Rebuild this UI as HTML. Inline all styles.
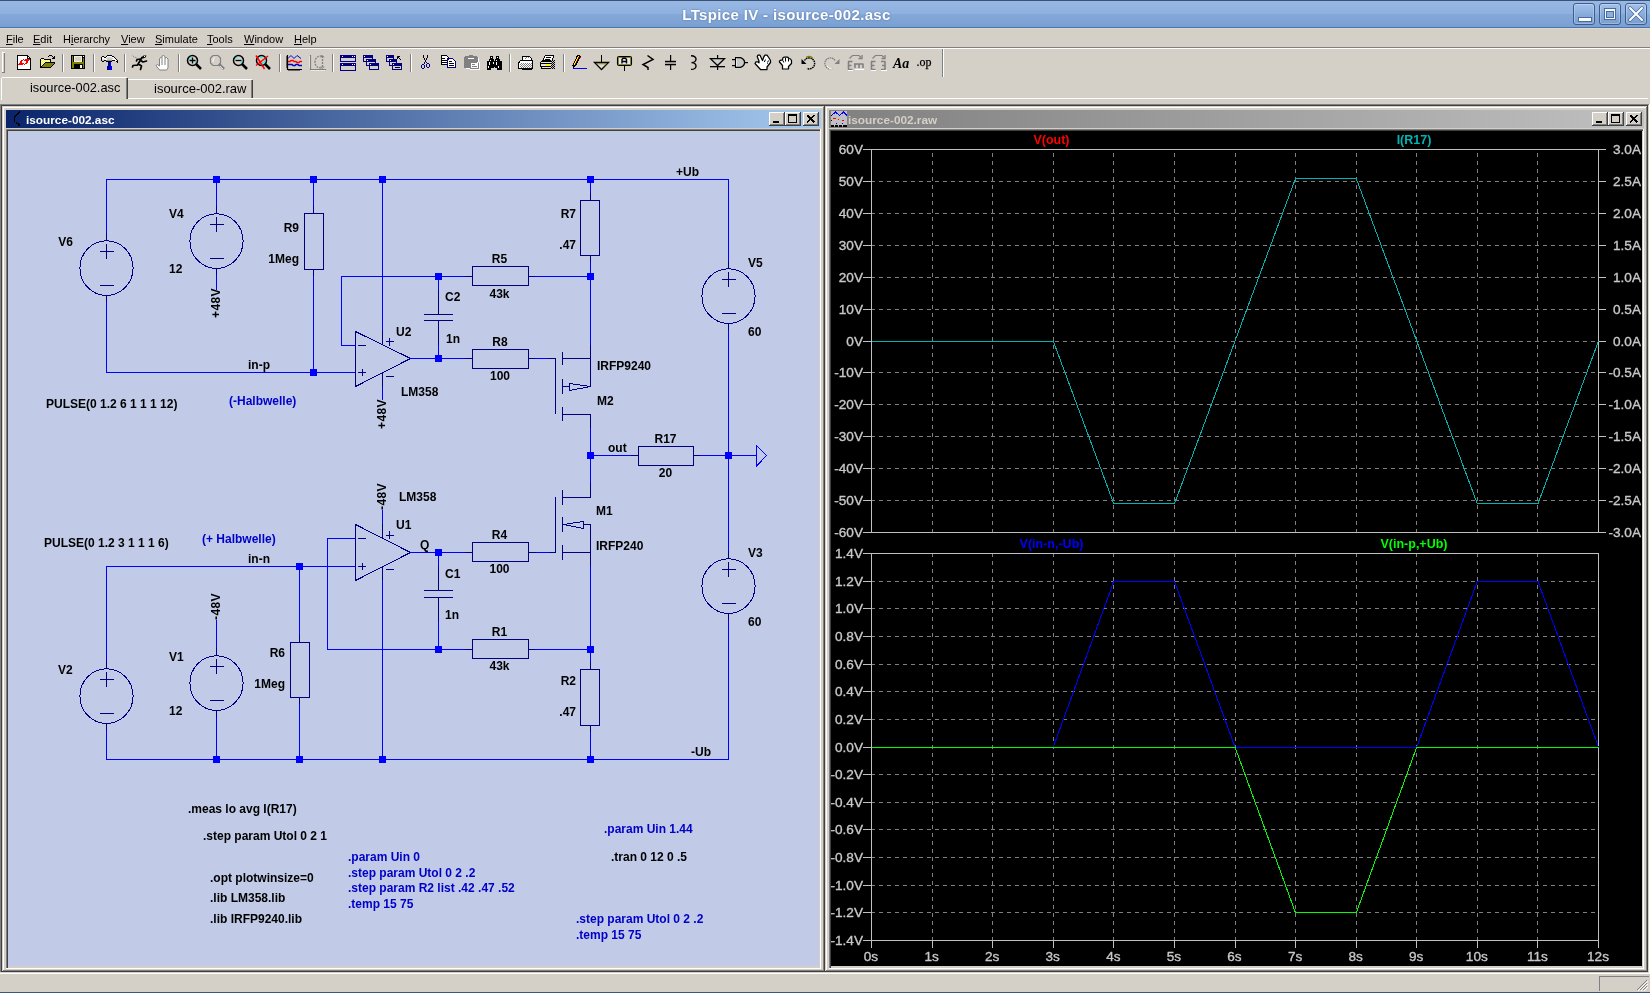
<!DOCTYPE html><html><head><meta charset="utf-8"><style>html,body{margin:0;padding:0;}body{width:1650px;height:993px;overflow:hidden;position:relative;background:#d4d0c8;font-family:"Liberation Sans",sans-serif;} svg,div{will-change:transform;}</style></head><body>
<div style="position:absolute;left:0;top:0;width:1650px;height:28px;background:linear-gradient(#9fc0ea 0px,#9fc0ea 1px,#98b8e3 1px,#8fb1df 14px,#84a8d8 14px,#7aa0d2 27px,#4a74ad 27px,#4a74ad 28px);"></div>
<div style="position:absolute;left:0;top:0;width:1650px;height:1px;background:#3c5278"></div>
<div style="position:absolute;left:0;top:28px;width:1650px;height:1px;background:#ddd9d0"></div>
<div style="position:absolute;left:0;top:6px;width:1573px;text-align:center;font:bold 15px 'Liberation Sans', sans-serif;color:#fff;text-shadow:0 0 2px #4a6a98;white-space:nowrap;letter-spacing:0.35px">LTspice IV - isource-002.asc</div>
<div style="position:absolute;left:1573px;top:3px;width:20px;height:20px;border:1px solid #3f5c8c;border-radius:3px;background:linear-gradient(#a4c2ea,#85aadb 55%,#7aa0d2);box-shadow:inset 0 0 0 1px rgba(255,255,255,0.25)"></div>
<div style="position:absolute;left:1599px;top:3px;width:20px;height:20px;border:1px solid #3f5c8c;border-radius:3px;background:linear-gradient(#a4c2ea,#85aadb 55%,#7aa0d2);box-shadow:inset 0 0 0 1px rgba(255,255,255,0.25)"></div>
<div style="position:absolute;left:1625px;top:3px;width:20px;height:20px;border:1px solid #3f5c8c;border-radius:3px;background:linear-gradient(#a4c2ea,#85aadb 55%,#7aa0d2);box-shadow:inset 0 0 0 1px rgba(255,255,255,0.25)"></div>
<div style="position:absolute;left:1578px;top:17px;width:12px;height:3px;background:#fff;border:1px solid #4a6a9c"></div>
<div style="position:absolute;left:1604px;top:8px;width:12px;height:12px;background:#4a6a9c"></div>
<div style="position:absolute;left:1605px;top:9px;width:10px;height:10px;background:#f4f8ff"></div>
<div style="position:absolute;left:1606px;top:11px;width:8px;height:7px;background:#4a6a9c"></div>
<div style="position:absolute;left:1607px;top:12px;width:6px;height:5px;background:#8cafdd"></div>
<svg style="position:absolute;left:1625px;top:3px" width="22" height="22"><path d="M5 5 L17 17 M17 5 L5 17" stroke="#4a6a9c" stroke-width="3.5" stroke-linecap="round"/><path d="M5 5 L17 17 M17 5 L5 17" stroke="#fff" stroke-width="2" stroke-linecap="round"/></svg>
<div style="position:absolute;left:6px;top:33px;font:11px 'Liberation Sans', sans-serif;color:#000;white-space:nowrap"><span style="text-decoration:underline;text-underline-offset:1px">F</span>ile</div>
<div style="position:absolute;left:33px;top:33px;font:11px 'Liberation Sans', sans-serif;color:#000;white-space:nowrap"><span style="text-decoration:underline;text-underline-offset:1px">E</span>dit</div>
<div style="position:absolute;left:63px;top:33px;font:11px 'Liberation Sans', sans-serif;color:#000;white-space:nowrap">H<span style="text-decoration:underline;text-underline-offset:1px">i</span>erarchy</div>
<div style="position:absolute;left:121px;top:33px;font:11px 'Liberation Sans', sans-serif;color:#000;white-space:nowrap"><span style="text-decoration:underline;text-underline-offset:1px">V</span>iew</div>
<div style="position:absolute;left:155px;top:33px;font:11px 'Liberation Sans', sans-serif;color:#000;white-space:nowrap"><span style="text-decoration:underline;text-underline-offset:1px">S</span>imulate</div>
<div style="position:absolute;left:207px;top:33px;font:11px 'Liberation Sans', sans-serif;color:#000;white-space:nowrap"><span style="text-decoration:underline;text-underline-offset:1px">T</span>ools</div>
<div style="position:absolute;left:244px;top:33px;font:11px 'Liberation Sans', sans-serif;color:#000;white-space:nowrap"><span style="text-decoration:underline;text-underline-offset:1px">W</span>indow</div>
<div style="position:absolute;left:294px;top:33px;font:11px 'Liberation Sans', sans-serif;color:#000;white-space:nowrap"><span style="text-decoration:underline;text-underline-offset:1px">H</span>elp</div>
<div style="position:absolute;left:0;top:47px;width:1650px;height:1px;background:#808080"></div>
<div style="position:absolute;left:0;top:48px;width:1650px;height:1px;background:#fff"></div>
<svg style="position:absolute;left:0;top:0" width="1650" height="80"><rect x="2" y="52" width="1" height="21" fill="#fff"/><rect x="3" y="52" width="2" height="21" fill="#d4d0c8"/><rect x="4" y="52" width="1" height="21" fill="#808080"/><rect x="2" y="52" width="3" height="1" fill="#fff"/><rect x="2" y="72" width="3" height="1" fill="#808080"/><rect x="17" y="55" width="11" height="1" fill="#000"/><rect x="17" y="56" width="1" height="1" fill="#000"/><rect x="18" y="56" width="9" height="1" fill="#fff"/><rect x="27" y="56" width="2" height="1" fill="#000"/><rect x="17" y="57" width="1" height="1" fill="#000"/><rect x="18" y="57" width="9" height="1" fill="#fff"/><rect x="27" y="57" width="1" height="1" fill="#000"/><rect x="28" y="57" width="1" height="1" fill="#fff"/><rect x="29" y="57" width="1" height="1" fill="#000"/><rect x="17" y="58" width="1" height="1" fill="#000"/><rect x="18" y="58" width="9" height="1" fill="#fff"/><rect x="27" y="58" width="4" height="1" fill="#000"/><rect x="17" y="59" width="1" height="1" fill="#000"/><rect x="18" y="59" width="12" height="1" fill="#fff"/><rect x="30" y="59" width="1" height="1" fill="#000"/><rect x="17" y="60" width="1" height="1" fill="#000"/><rect x="18" y="60" width="12" height="1" fill="#fff"/><rect x="30" y="60" width="1" height="1" fill="#000"/><rect x="17" y="61" width="1" height="1" fill="#000"/><rect x="18" y="61" width="12" height="1" fill="#fff"/><rect x="30" y="61" width="1" height="1" fill="#000"/><rect x="17" y="62" width="1" height="1" fill="#000"/><rect x="18" y="62" width="12" height="1" fill="#fff"/><rect x="30" y="62" width="1" height="1" fill="#000"/><rect x="17" y="63" width="1" height="1" fill="#000"/><rect x="18" y="63" width="12" height="1" fill="#fff"/><rect x="30" y="63" width="1" height="1" fill="#000"/><rect x="17" y="64" width="1" height="1" fill="#000"/><rect x="18" y="64" width="12" height="1" fill="#fff"/><rect x="30" y="64" width="1" height="1" fill="#000"/><rect x="17" y="65" width="1" height="1" fill="#000"/><rect x="18" y="65" width="12" height="1" fill="#fff"/><rect x="30" y="65" width="1" height="1" fill="#000"/><rect x="17" y="66" width="1" height="1" fill="#000"/><rect x="18" y="66" width="12" height="1" fill="#fff"/><rect x="30" y="66" width="1" height="1" fill="#000"/><rect x="17" y="67" width="1" height="1" fill="#000"/><rect x="18" y="67" width="12" height="1" fill="#fff"/><rect x="30" y="67" width="1" height="1" fill="#000"/><rect x="17" y="68" width="1" height="1" fill="#000"/><rect x="18" y="68" width="12" height="1" fill="#fff"/><rect x="30" y="68" width="1" height="1" fill="#000"/><rect x="17" y="69" width="14" height="1" fill="#000"/><rect x="23" y="59" width="1" height="1" fill="#f00"/><rect x="25" y="59" width="5" height="1" fill="#f00"/><rect x="21" y="60" width="2" height="1" fill="#f00"/><rect x="24" y="60" width="5" height="1" fill="#f00"/><rect x="20" y="61" width="2" height="1" fill="#f00"/><rect x="26" y="61" width="2" height="1" fill="#f00"/><rect x="20" y="62" width="2" height="1" fill="#f00"/><rect x="26" y="62" width="2" height="1" fill="#f00"/><rect x="19" y="63" width="5" height="1" fill="#f00"/><rect x="25" y="63" width="2" height="1" fill="#f00"/><rect x="18" y="64" width="5" height="1" fill="#f00"/><rect x="24" y="64" width="1" height="1" fill="#f00"/><rect x="49" y="55" width="3" height="1" fill="#000"/><rect x="48" y="56" width="1" height="1" fill="#000"/><rect x="52" y="56" width="1" height="1" fill="#000"/><rect x="54" y="56" width="1" height="1" fill="#000"/><rect x="53" y="57" width="2" height="1" fill="#000"/><rect x="52" y="58" width="3" height="1" fill="#000"/><rect x="41" y="58" width="3" height="1" fill="#000"/><rect x="40" y="59" width="1" height="1" fill="#000"/><rect x="44" y="59" width="7" height="1" fill="#000"/><rect x="40" y="60" width="1" height="1" fill="#000"/><rect x="50" y="60" width="1" height="1" fill="#000"/><rect x="40" y="61" width="1" height="1" fill="#000"/><rect x="50" y="61" width="1" height="1" fill="#000"/><rect x="40" y="62" width="1" height="1" fill="#000"/><rect x="45" y="62" width="10" height="1" fill="#000"/><rect x="40" y="63" width="1" height="1" fill="#000"/><rect x="44" y="63" width="1" height="1" fill="#000"/><rect x="45" y="63" width="9" height="1" fill="#808000"/><rect x="54" y="63" width="1" height="1" fill="#000"/><rect x="40" y="64" width="1" height="1" fill="#000"/><rect x="43" y="64" width="1" height="1" fill="#000"/><rect x="44" y="64" width="9" height="1" fill="#808000"/><rect x="53" y="64" width="1" height="1" fill="#000"/><rect x="40" y="65" width="1" height="1" fill="#000"/><rect x="42" y="65" width="1" height="1" fill="#000"/><rect x="43" y="65" width="9" height="1" fill="#808000"/><rect x="52" y="65" width="1" height="1" fill="#000"/><rect x="40" y="66" width="2" height="1" fill="#000"/><rect x="42" y="66" width="9" height="1" fill="#808000"/><rect x="51" y="66" width="1" height="1" fill="#000"/><rect x="40" y="67" width="11" height="1" fill="#000"/><rect x="41" y="59" width="1" height="1" fill="#fff"/><rect x="42" y="59" width="1" height="1" fill="#ffff00"/><rect x="43" y="59" width="1" height="1" fill="#fff"/><rect x="41" y="60" width="1" height="1" fill="#ffff00"/><rect x="42" y="60" width="1" height="1" fill="#fff"/><rect x="43" y="60" width="1" height="1" fill="#ffff00"/><rect x="44" y="60" width="1" height="1" fill="#fff"/><rect x="45" y="60" width="1" height="1" fill="#ffff00"/><rect x="46" y="60" width="1" height="1" fill="#fff"/><rect x="47" y="60" width="1" height="1" fill="#ffff00"/><rect x="48" y="60" width="1" height="1" fill="#fff"/><rect x="49" y="60" width="1" height="1" fill="#ffff00"/><rect x="41" y="61" width="1" height="1" fill="#fff"/><rect x="42" y="61" width="1" height="1" fill="#ffff00"/><rect x="43" y="61" width="1" height="1" fill="#fff"/><rect x="44" y="61" width="1" height="1" fill="#ffff00"/><rect x="45" y="61" width="1" height="1" fill="#fff"/><rect x="46" y="61" width="1" height="1" fill="#ffff00"/><rect x="47" y="61" width="1" height="1" fill="#fff"/><rect x="48" y="61" width="1" height="1" fill="#ffff00"/><rect x="49" y="61" width="1" height="1" fill="#fff"/><rect x="41" y="62" width="1" height="1" fill="#ffff00"/><rect x="42" y="62" width="1" height="1" fill="#fff"/><rect x="43" y="62" width="1" height="1" fill="#ffff00"/><rect x="44" y="62" width="1" height="1" fill="#fff"/><rect x="41" y="63" width="1" height="1" fill="#fff"/><rect x="42" y="63" width="1" height="1" fill="#ffff00"/><rect x="43" y="63" width="1" height="1" fill="#fff"/><rect x="41" y="64" width="1" height="1" fill="#ffff00"/><rect x="42" y="64" width="1" height="1" fill="#fff"/><rect x="41" y="65" width="1" height="1" fill="#fff"/><rect x="62" y="54" width="1" height="18" fill="#808080"/><rect x="63" y="54" width="1" height="18" fill="#fff"/><rect x="71" y="55" width="14" height="1" fill="#000"/><rect x="71" y="56" width="14" height="1" fill="#000"/><rect x="71" y="57" width="14" height="1" fill="#000"/><rect x="71" y="58" width="14" height="1" fill="#000"/><rect x="71" y="59" width="14" height="1" fill="#000"/><rect x="71" y="60" width="14" height="1" fill="#000"/><rect x="71" y="61" width="14" height="1" fill="#000"/><rect x="71" y="62" width="14" height="1" fill="#000"/><rect x="71" y="63" width="14" height="1" fill="#000"/><rect x="71" y="64" width="14" height="1" fill="#000"/><rect x="71" y="65" width="14" height="1" fill="#000"/><rect x="71" y="66" width="14" height="1" fill="#000"/><rect x="71" y="67" width="14" height="1" fill="#000"/><rect x="71" y="68" width="14" height="1" fill="#000"/><rect x="72" y="56" width="1" height="1" fill="#808000"/><rect x="72" y="57" width="1" height="1" fill="#808000"/><rect x="72" y="58" width="1" height="1" fill="#808000"/><rect x="72" y="59" width="1" height="1" fill="#808000"/><rect x="72" y="60" width="1" height="1" fill="#808000"/><rect x="72" y="61" width="1" height="1" fill="#808000"/><rect x="72" y="62" width="1" height="1" fill="#808000"/><rect x="72" y="63" width="1" height="1" fill="#808000"/><rect x="72" y="64" width="1" height="1" fill="#808000"/><rect x="72" y="65" width="1" height="1" fill="#808000"/><rect x="72" y="66" width="1" height="1" fill="#808000"/><rect x="72" y="67" width="1" height="1" fill="#808000"/><rect x="83" y="58" width="1" height="1" fill="#808000"/><rect x="83" y="59" width="1" height="1" fill="#808000"/><rect x="83" y="60" width="1" height="1" fill="#808000"/><rect x="83" y="61" width="1" height="1" fill="#808000"/><rect x="83" y="62" width="1" height="1" fill="#808000"/><rect x="83" y="63" width="1" height="1" fill="#808000"/><rect x="83" y="64" width="1" height="1" fill="#808000"/><rect x="83" y="65" width="1" height="1" fill="#808000"/><rect x="83" y="66" width="1" height="1" fill="#808000"/><rect x="83" y="67" width="1" height="1" fill="#808000"/><rect x="73" y="62" width="1" height="1" fill="#808000"/><rect x="73" y="63" width="1" height="1" fill="#808000"/><rect x="73" y="64" width="1" height="1" fill="#808000"/><rect x="73" y="65" width="1" height="1" fill="#808000"/><rect x="73" y="66" width="1" height="1" fill="#808000"/><rect x="73" y="67" width="1" height="1" fill="#808000"/><rect x="73" y="62" width="10" height="1" fill="#808000"/><rect x="73" y="63" width="10" height="1" fill="#808000"/><rect x="74" y="56" width="8" height="1" fill="#f0eee8"/><rect x="74" y="61" width="8" height="1" fill="#f0eee8"/><rect x="74" y="57" width="1" height="1" fill="#f0eee8"/><rect x="74" y="58" width="1" height="1" fill="#f0eee8"/><rect x="74" y="59" width="1" height="1" fill="#f0eee8"/><rect x="74" y="60" width="1" height="1" fill="#f0eee8"/><rect x="81" y="57" width="1" height="1" fill="#f0eee8"/><rect x="81" y="58" width="1" height="1" fill="#f0eee8"/><rect x="81" y="59" width="1" height="1" fill="#f0eee8"/><rect x="81" y="60" width="1" height="1" fill="#f0eee8"/><rect x="75" y="57" width="6" height="1" fill="#d4d0c8"/><rect x="75" y="58" width="6" height="1" fill="#d4d0c8"/><rect x="75" y="59" width="6" height="1" fill="#d4d0c8"/><rect x="75" y="60" width="6" height="1" fill="#d4d0c8"/><rect x="83" y="56" width="1" height="1" fill="#fff"/><rect x="80" y="65" width="2" height="1" fill="#fff"/><rect x="80" y="66" width="2" height="1" fill="#f0f0f0"/><rect x="80" y="67" width="2" height="1" fill="#fff"/><rect x="93" y="54" width="1" height="18" fill="#808080"/><rect x="94" y="54" width="1" height="18" fill="#fff"/><rect x="107" y="55" width="5" height="1" fill="#000"/><rect x="102" y="56" width="2" height="1" fill="#000"/><rect x="106" y="56" width="1" height="1" fill="#000"/><rect x="107" y="56" width="5" height="1" fill="#fff"/><rect x="112" y="56" width="2" height="1" fill="#000"/><rect x="101" y="57" width="1" height="1" fill="#000"/><rect x="102" y="57" width="2" height="1" fill="#fff"/><rect x="104" y="57" width="2" height="1" fill="#000"/><rect x="106" y="57" width="1" height="1" fill="#fff"/><rect x="107" y="57" width="5" height="1" fill="#d8d8d8"/><rect x="112" y="57" width="2" height="1" fill="#fff"/><rect x="114" y="57" width="1" height="1" fill="#000"/><rect x="101" y="58" width="1" height="1" fill="#000"/><rect x="102" y="58" width="4" height="1" fill="#fff"/><rect x="106" y="58" width="7" height="1" fill="#d0d0d0"/><rect x="113" y="58" width="2" height="1" fill="#fff"/><rect x="115" y="58" width="1" height="1" fill="#000"/><rect x="101" y="59" width="1" height="1" fill="#000"/><rect x="102" y="59" width="3" height="1" fill="#e0e0e0"/><rect x="105" y="59" width="2" height="1" fill="#fff"/><rect x="107" y="59" width="5" height="1" fill="#c8c8c8"/><rect x="112" y="59" width="4" height="1" fill="#fff"/><rect x="116" y="59" width="1" height="1" fill="#000"/><rect x="101" y="60" width="1" height="1" fill="#000"/><rect x="102" y="60" width="2" height="1" fill="#c0c0c0"/><rect x="104" y="60" width="2" height="1" fill="#000"/><rect x="106" y="60" width="6" height="1" fill="#909090"/><rect x="112" y="60" width="3" height="1" fill="#000"/><rect x="115" y="60" width="2" height="1" fill="#fff"/><rect x="117" y="60" width="1" height="1" fill="#000"/><rect x="102" y="61" width="2" height="1" fill="#000"/><rect x="106" y="61" width="6" height="1" fill="#000"/><rect x="116" y="61" width="2" height="1" fill="#000"/><rect x="117" y="62" width="1" height="1" fill="#000"/><defs><linearGradient id="hg" x1="0" x2="1"><stop offset="0" stop-color="#0000a0"/><stop offset="0.45" stop-color="#000080"/><stop offset="0.75" stop-color="#0000ff"/><stop offset="1" stop-color="#0000ff"/></linearGradient></defs><rect x="108" y="62" width="3" height="4" fill="url(#hg)"/><rect x="107" y="66" width="5" height="4" fill="url(#hg)"/><rect x="124" y="54" width="1" height="18" fill="#808080"/><rect x="125" y="54" width="1" height="18" fill="#fff"/><g transform="translate(132,55)"><path d="M10 2.5 L5.5 10 M8.5 4 L5 4.5 L4.5 6 M9.5 6 L11 7 L14.5 6 M5.5 10 L1 10.5 L0.5 12 M6.5 9 L9.5 11 L8.5 14.5" fill="none" stroke="#000" stroke-width="1.7" stroke-linejoin="round" stroke-linecap="round"/><path d="M9 3 L11.5 0.5 H14.5 L13.5 2.5 L11 3.5 Z" fill="#000"/><rect x="12" y="1" width="1" height="1" fill="#fff"/><path d="M0.5 0.5 L2.5 2.5 M3 2 L5 3.5" stroke="#909090" stroke-width="1"/></g><g transform="translate(155,55)"><path d="M4.5 15 L1 10.5 L2.5 9.5 L4.5 11 V3.5 L6 2.5 L7 3.5 V1 L8.5 0.5 L10 1.5 V3 L11.5 2.5 L13 4 V13 L11.5 15 Z" fill="#fff" stroke="#808080"/><path d="M7 4 V10 M10 3 V10" stroke="#808080"/></g><rect x="178" y="54" width="1" height="18" fill="#808080"/><rect x="179" y="54" width="1" height="18" fill="#fff"/><g transform="translate(187,55)"><circle cx="5.5" cy="5.5" r="5" fill="none" stroke="#000" stroke-width="1.5"/><path d="M2.5 4 Q3 2 5 2" stroke="#00ffff" fill="none"/><path d="M8 8 Q9 7 8.5 6" stroke="#00ffff" fill="none"/><path d="M5.5 2.5 V8.5 M2.5 5.5 H8.5" stroke="#000" stroke-width="1.3"/><path d="M9 9 L14 14" stroke="#000" stroke-width="2.5"/></g><g transform="translate(210,55)"><path d="M3 0.5 H8 L10.5 3 V8 L8 10.5 H3 L0.5 8 V3 Z" fill="none" stroke="#808080" stroke-width="1.2"/><path d="M3 7 Q2.5 4 4.5 2.5" stroke="#fff" fill="none"/><path d="M9 9 L14 14" stroke="#808080" stroke-width="2.5"/><path d="M10 11 L13 14" stroke="#fff" stroke-width="0.8"/></g><g transform="translate(233,55)"><circle cx="5.5" cy="5.5" r="5" fill="none" stroke="#000" stroke-width="1.5"/><path d="M2.5 4 Q3 2 5 2" stroke="#00ffff" fill="none"/><path d="M8 8 Q9 7 8.5 6" stroke="#00ffff" fill="none"/><path d="M2.5 5.5 H8.5" stroke="#000" stroke-width="1.3"/><path d="M9 9 L14 14" stroke="#000" stroke-width="2.5"/></g><g transform="translate(256,55)"><circle cx="5.5" cy="5.5" r="5" fill="none" stroke="#000" stroke-width="1.5"/><path d="M4 2.5 Q6 2 7 3" stroke="#00ffff" fill="none"/><path d="M6 8 Q8 8 9 6" stroke="#00ffff" stroke-width="1.5" fill="none"/><path d="M0 0.5 L8.5 14 M12 1 L0 10.5" stroke="#f00" stroke-width="1.5"/><path d="M9 9 L14 14" stroke="#000" stroke-width="2.5"/></g><rect x="279" y="54" width="1" height="18" fill="#808080"/><rect x="280" y="54" width="1" height="18" fill="#fff"/><g transform="translate(286,55)"><path d="M1.5 0 V15 M1 14.5 H16" stroke="#000" stroke-width="1.2"/><path d="M0 2 H1 M0 4 H1 M0 6 H1 M0 8 H1 M0 10 H1 M0 12 H1 M3 15 V16 M5 15 V16 M7 15 V16 M9 15 V16 M11 15 V16 M13 15 V16" stroke="#000"/><path d="M2 3.5 L5 0.5 L8 3.5 L11 0.5 L15 3.5" fill="none" stroke="#0000c0" stroke-width="1"/><path d="M2 6.5 H4 L5 5.5 H7 L8 6.5 H10 L11 7.5 H13 L14 6.5 H16" fill="none" stroke="#f00" stroke-width="1.4"/><path d="M2 9.5 H6 L7 10.5 H9 L10 9.5 H12 L13 10.5 H16" fill="none" stroke="#0000c0" stroke-width="1.4"/></g><g transform="translate(309,55)"><path d="M1.5 0 V14.5 H17" fill="none" stroke="#808080" stroke-width="1.2"/><path d="M0 2 H1 M0 4 H1 M0 6 H1 M0 8 H1 M0 10 H1 M0 12 H1 M3 15 V16 M5 15 V16 M7 15 V16 M9 15 V16 M11 15 V16 M13 15 V16 M15 15 V16" stroke="#fff"/><path d="M13 1 Q6 1 6 7 Q6 13 13 13 M13.5 1 V13" fill="none" stroke="#808080" stroke-width="1.3" stroke-dasharray="2 1"/><path d="M12 2.5 L13.5 0.5 L15 2.5 M12 11.5 L13.5 13.5 L15 11.5" fill="none" stroke="#808080"/></g><rect x="332" y="54" width="1" height="18" fill="#808080"/><rect x="333" y="54" width="1" height="18" fill="#fff"/><g transform="translate(340,55)"><rect x="0" y="0" width="16" height="7" fill="#000080"/><rect x="1" y="3" width="14" height="3" fill="#d4d0c8"/><rect x="0" y="8" width="16" height="8" fill="#000080"/><rect x="1" y="11" width="14" height="4" fill="#d4d0c8"/><rect x="2" y="1" width="1" height="1" fill="#fff"/><rect x="12" y="1" width="1" height="1" fill="#fff"/><rect x="14" y="1" width="1" height="1" fill="#fff"/><rect x="2" y="9" width="1" height="1" fill="#fff"/><rect x="12" y="9" width="1" height="1" fill="#fff"/><rect x="14" y="9" width="1" height="1" fill="#fff"/></g><g transform="translate(363,55)"><rect x="0" y="0" width="10" height="7" fill="#000080"/><rect x="1" y="3" width="8" height="3" fill="#d4d0c8"/><rect x="1" y="1" width="1" height="1" fill="#fff"/><rect x="3" y="4" width="10" height="7" fill="#000080"/><rect x="4" y="7" width="8" height="3" fill="#d4d0c8"/><rect x="4" y="5" width="1" height="1" fill="#fff"/><rect x="6" y="8" width="10" height="7" fill="#000080"/><rect x="7" y="11" width="8" height="3" fill="#d4d0c8"/><rect x="7" y="9" width="1" height="1" fill="#fff"/></g><g transform="translate(386,55)"><rect x="0" y="0" width="8" height="7" fill="#000080"/><rect x="1" y="3" width="6" height="3" fill="#d4d0c8"/><rect x="1" y="1" width="1" height="1" fill="#fff"/><rect x="3" y="4" width="8" height="7" fill="#000080"/><rect x="4" y="7" width="6" height="3" fill="#d4d0c8"/><rect x="4" y="5" width="1" height="1" fill="#fff"/><rect x="6" y="8" width="10" height="7" fill="#000080"/><rect x="7" y="11" width="8" height="3" fill="#d4d0c8"/><rect x="7" y="9" width="1" height="1" fill="#fff"/><rect x="9" y="12" width="5" height="1" fill="#000"/><path d="M11.5 1.5 L15 5 M11.5 1.5 H14 M11.5 1.5 V4" stroke="#000" fill="none"/></g><rect x="410" y="54" width="1" height="18" fill="#808080"/><rect x="411" y="54" width="1" height="18" fill="#fff"/><rect x="423" y="55" width="1" height="1" fill="#000"/><rect x="423" y="56" width="1" height="1" fill="#000"/><rect x="423" y="57" width="1" height="1" fill="#000"/><rect x="424" y="58" width="1" height="1" fill="#000"/><rect x="424" y="59" width="1" height="1" fill="#000"/><rect x="425" y="60" width="1" height="1" fill="#000"/><rect x="425" y="61" width="1" height="1" fill="#000"/><rect x="427" y="55" width="1" height="1" fill="#000"/><rect x="427" y="56" width="1" height="1" fill="#000"/><rect x="427" y="57" width="1" height="1" fill="#000"/><rect x="426" y="58" width="1" height="1" fill="#000"/><rect x="426" y="59" width="1" height="1" fill="#000"/><rect x="424" y="62" width="1" height="1" fill="#000080"/><rect x="424" y="63" width="1" height="1" fill="#000080"/><rect x="426" y="62" width="1" height="1" fill="#000080"/><rect x="422" y="64" width="2" height="1" fill="#000080"/><rect x="421" y="65" width="1" height="1" fill="#000080"/><rect x="421" y="66" width="1" height="1" fill="#000080"/><rect x="421" y="67" width="1" height="1" fill="#000080"/><rect x="424" y="65" width="1" height="1" fill="#000080"/><rect x="424" y="66" width="1" height="1" fill="#000080"/><rect x="424" y="67" width="1" height="1" fill="#000080"/><rect x="422" y="68" width="2" height="1" fill="#000080"/><rect x="427" y="63" width="2" height="1" fill="#000080"/><rect x="426" y="64" width="1" height="1" fill="#000080"/><rect x="426" y="65" width="1" height="1" fill="#000080"/><rect x="426" y="66" width="1" height="1" fill="#000080"/><rect x="429" y="64" width="1" height="1" fill="#000080"/><rect x="429" y="65" width="1" height="1" fill="#000080"/><rect x="429" y="66" width="1" height="1" fill="#000080"/><rect x="427" y="67" width="2" height="1" fill="#000080"/><rect x="441" y="55" width="6" height="1" fill="#000"/><rect x="441" y="56" width="1" height="1" fill="#000"/><rect x="441" y="57" width="1" height="1" fill="#000"/><rect x="441" y="58" width="1" height="1" fill="#000"/><rect x="441" y="59" width="1" height="1" fill="#000"/><rect x="441" y="60" width="1" height="1" fill="#000"/><rect x="441" y="61" width="1" height="1" fill="#000"/><rect x="441" y="62" width="1" height="1" fill="#000"/><rect x="441" y="63" width="1" height="1" fill="#000"/><rect x="441" y="64" width="1" height="1" fill="#000"/><rect x="441" y="64" width="7" height="1" fill="#000"/><rect x="447" y="56" width="1" height="1" fill="#000"/><rect x="448" y="57" width="1" height="1" fill="#000"/><rect x="442" y="56" width="5" height="1" fill="#fff"/><rect x="442" y="57" width="5" height="1" fill="#fff"/><rect x="442" y="58" width="5" height="1" fill="#fff"/><rect x="442" y="59" width="5" height="1" fill="#fff"/><rect x="442" y="60" width="5" height="1" fill="#fff"/><rect x="442" y="61" width="5" height="1" fill="#fff"/><rect x="442" y="62" width="5" height="1" fill="#fff"/><rect x="442" y="63" width="5" height="1" fill="#fff"/><rect x="447" y="57" width="1" height="1" fill="#fff"/><rect x="442" y="58" width="3" height="1" fill="#000"/><rect x="442" y="60" width="5" height="1" fill="#000"/><rect x="442" y="62" width="5" height="1" fill="#000"/><rect x="447" y="58" width="6" height="1" fill="#000080"/><rect x="453" y="59" width="1" height="1" fill="#000080"/><rect x="454" y="60" width="1" height="1" fill="#000080"/><rect x="447" y="59" width="1" height="1" fill="#000080"/><rect x="447" y="60" width="1" height="1" fill="#000080"/><rect x="447" y="61" width="1" height="1" fill="#000080"/><rect x="447" y="62" width="1" height="1" fill="#000080"/><rect x="447" y="63" width="1" height="1" fill="#000080"/><rect x="447" y="64" width="1" height="1" fill="#000080"/><rect x="447" y="65" width="1" height="1" fill="#000080"/><rect x="447" y="66" width="1" height="1" fill="#000080"/><rect x="447" y="67" width="1" height="1" fill="#000080"/><rect x="455" y="61" width="1" height="1" fill="#000080"/><rect x="455" y="62" width="1" height="1" fill="#000080"/><rect x="455" y="63" width="1" height="1" fill="#000080"/><rect x="455" y="64" width="1" height="1" fill="#000080"/><rect x="455" y="65" width="1" height="1" fill="#000080"/><rect x="455" y="66" width="1" height="1" fill="#000080"/><rect x="455" y="67" width="1" height="1" fill="#000080"/><rect x="447" y="67" width="9" height="1" fill="#000080"/><rect x="448" y="59" width="5" height="1" fill="#fff"/><rect x="448" y="60" width="6" height="1" fill="#fff"/><rect x="448" y="61" width="7" height="1" fill="#fff"/><rect x="448" y="62" width="7" height="1" fill="#fff"/><rect x="448" y="63" width="7" height="1" fill="#fff"/><rect x="448" y="64" width="7" height="1" fill="#fff"/><rect x="448" y="65" width="7" height="1" fill="#fff"/><rect x="448" y="66" width="7" height="1" fill="#fff"/><rect x="448" y="59" width="1" height="1" fill="#000080"/><rect x="449" y="61" width="3" height="1" fill="#000"/><rect x="449" y="63" width="5" height="1" fill="#000"/><rect x="449" y="65" width="5" height="1" fill="#000"/><rect x="453" y="60" width="1" height="1" fill="#fff"/><rect x="469" y="55" width="4" height="1" fill="#808080"/><rect x="465" y="56" width="12" height="1" fill="#808080"/><rect x="464" y="57" width="14" height="1" fill="#808080"/><rect x="464" y="58" width="14" height="1" fill="#808080"/><rect x="464" y="59" width="14" height="1" fill="#808080"/><rect x="464" y="60" width="14" height="1" fill="#808080"/><rect x="464" y="61" width="14" height="1" fill="#808080"/><rect x="464" y="62" width="14" height="1" fill="#808080"/><rect x="464" y="63" width="14" height="1" fill="#808080"/><rect x="464" y="64" width="14" height="1" fill="#808080"/><rect x="464" y="65" width="14" height="1" fill="#808080"/><rect x="464" y="66" width="14" height="1" fill="#808080"/><rect x="464" y="67" width="14" height="1" fill="#808080"/><rect x="468" y="58" width="6" height="1" fill="#fff"/><rect x="478" y="58" width="1" height="1" fill="#fff"/><rect x="478" y="59" width="1" height="1" fill="#fff"/><rect x="478" y="60" width="1" height="1" fill="#fff"/><rect x="478" y="61" width="1" height="1" fill="#fff"/><rect x="470" y="62" width="8" height="1" fill="#808080"/><rect x="470" y="63" width="1" height="1" fill="#808080"/><rect x="470" y="64" width="1" height="1" fill="#808080"/><rect x="470" y="65" width="1" height="1" fill="#808080"/><rect x="470" y="66" width="1" height="1" fill="#808080"/><rect x="470" y="67" width="1" height="1" fill="#808080"/><rect x="470" y="68" width="1" height="1" fill="#808080"/><rect x="470" y="68" width="9" height="1" fill="#808080"/><rect x="478" y="63" width="1" height="1" fill="#808080"/><rect x="478" y="64" width="1" height="1" fill="#808080"/><rect x="478" y="65" width="1" height="1" fill="#808080"/><rect x="478" y="66" width="1" height="1" fill="#808080"/><rect x="478" y="67" width="1" height="1" fill="#808080"/><rect x="471" y="63" width="7" height="1" fill="#fff"/><rect x="471" y="64" width="7" height="1" fill="#fff"/><rect x="471" y="65" width="7" height="1" fill="#fff"/><rect x="471" y="66" width="7" height="1" fill="#fff"/><rect x="471" y="67" width="7" height="1" fill="#fff"/><rect x="472" y="64" width="3" height="1" fill="#808080"/><rect x="472" y="66" width="5" height="1" fill="#808080"/><rect x="477" y="62" width="1" height="1" fill="#fff"/><rect x="477" y="61" width="1" height="1" fill="#808080"/><rect x="466" y="68" width="4" height="1" fill="#fff"/><rect x="470" y="69" width="10" height="1" fill="#fff"/><rect x="479" y="62" width="1" height="1" fill="#fff"/><rect x="479" y="63" width="1" height="1" fill="#fff"/><rect x="479" y="64" width="1" height="1" fill="#fff"/><rect x="479" y="65" width="1" height="1" fill="#fff"/><rect x="479" y="66" width="1" height="1" fill="#fff"/><rect x="479" y="67" width="1" height="1" fill="#fff"/><rect x="479" y="68" width="1" height="1" fill="#fff"/><rect x="490" y="56" width="3" height="1" fill="#000"/><rect x="496" y="56" width="3" height="1" fill="#000"/><rect x="490" y="57" width="3" height="1" fill="#000"/><rect x="496" y="57" width="3" height="1" fill="#000"/><rect x="490" y="58" width="3" height="1" fill="#000"/><rect x="496" y="58" width="3" height="1" fill="#000"/><rect x="489" y="59" width="5" height="1" fill="#000"/><rect x="495" y="59" width="5" height="1" fill="#000"/><rect x="489" y="60" width="5" height="1" fill="#000"/><rect x="495" y="60" width="5" height="1" fill="#000"/><rect x="487" y="61" width="15" height="1" fill="#000"/><rect x="487" y="62" width="15" height="1" fill="#000"/><rect x="487" y="63" width="15" height="1" fill="#000"/><rect x="487" y="64" width="15" height="1" fill="#000"/><rect x="487" y="65" width="15" height="1" fill="#000"/><rect x="487" y="66" width="15" height="1" fill="#000"/><rect x="487" y="67" width="4" height="1" fill="#000"/><rect x="497" y="67" width="5" height="1" fill="#000"/><rect x="487" y="68" width="4" height="1" fill="#000"/><rect x="497" y="68" width="5" height="1" fill="#000"/><rect x="487" y="69" width="4" height="1" fill="#000"/><rect x="497" y="69" width="5" height="1" fill="#000"/><rect x="491" y="67" width="3" height="1" fill="#000"/><rect x="495" y="67" width="2" height="1" fill="#000"/><rect x="491" y="57" width="1" height="1" fill="#fff"/><rect x="497" y="57" width="1" height="1" fill="#fff"/><rect x="490" y="60" width="1" height="1" fill="#fff"/><rect x="496" y="60" width="1" height="1" fill="#fff"/><rect x="489" y="62" width="1" height="1" fill="#fff"/><rect x="489" y="63" width="1" height="1" fill="#fff"/><rect x="489" y="64" width="1" height="1" fill="#fff"/><rect x="493" y="62" width="1" height="1" fill="#fff"/><rect x="493" y="63" width="1" height="1" fill="#fff"/><rect x="496" y="62" width="1" height="1" fill="#fff"/><rect x="496" y="63" width="1" height="1" fill="#fff"/><rect x="496" y="64" width="1" height="1" fill="#fff"/><rect x="488" y="66" width="1" height="1" fill="#fff"/><rect x="488" y="67" width="1" height="1" fill="#fff"/><rect x="498" y="66" width="1" height="1" fill="#fff"/><rect x="498" y="67" width="1" height="1" fill="#fff"/><rect x="509" y="54" width="1" height="18" fill="#808080"/><rect x="510" y="54" width="1" height="18" fill="#fff"/><rect x="522" y="56" width="8" height="1" fill="#000"/><rect x="522" y="57" width="1" height="1" fill="#000"/><rect x="530" y="57" width="1" height="1" fill="#000"/><rect x="522" y="58" width="1" height="1" fill="#000"/><rect x="531" y="58" width="1" height="1" fill="#000"/><rect x="522" y="59" width="1" height="1" fill="#000"/><rect x="531" y="59" width="1" height="1" fill="#000"/><rect x="523" y="57" width="7" height="1" fill="#fff"/><rect x="523" y="58" width="8" height="1" fill="#fff"/><rect x="523" y="59" width="8" height="1" fill="#fff"/><rect x="525" y="58" width="1" height="1" fill="#808080"/><rect x="526" y="57" width="1" height="1" fill="#808080"/><rect x="527" y="58" width="1" height="1" fill="#fff"/><rect x="528" y="57" width="1" height="1" fill="#808080"/><rect x="520" y="60" width="13" height="1" fill="#000"/><rect x="519" y="61" width="1" height="1" fill="#000"/><rect x="532" y="61" width="1" height="1" fill="#000"/><rect x="518" y="62" width="1" height="1" fill="#000"/><rect x="532" y="62" width="1" height="1" fill="#000"/><rect x="520" y="61" width="12" height="1" fill="#fff"/><rect x="519" y="62" width="13" height="1" fill="#fff"/><rect x="518" y="63" width="1" height="1" fill="#000"/><rect x="519" y="63" width="13" height="1" fill="#fff"/><rect x="532" y="63" width="1" height="1" fill="#000"/><rect x="521" y="63" width="1" height="1" fill="#808080"/><rect x="523" y="63" width="1" height="1" fill="#808080"/><rect x="525" y="63" width="1" height="1" fill="#808080"/><rect x="527" y="63" width="1" height="1" fill="#808080"/><rect x="529" y="63" width="1" height="1" fill="#808080"/><rect x="531" y="63" width="1" height="1" fill="#808080"/><rect x="518" y="64" width="1" height="1" fill="#000"/><rect x="519" y="64" width="13" height="1" fill="#fff"/><rect x="532" y="64" width="1" height="1" fill="#000"/><rect x="520" y="64" width="1" height="1" fill="#808080"/><rect x="522" y="64" width="1" height="1" fill="#808080"/><rect x="524" y="64" width="1" height="1" fill="#808080"/><rect x="526" y="64" width="1" height="1" fill="#808080"/><rect x="528" y="64" width="1" height="1" fill="#808080"/><rect x="530" y="64" width="1" height="1" fill="#808080"/><rect x="518" y="65" width="1" height="1" fill="#000"/><rect x="519" y="65" width="13" height="1" fill="#fff"/><rect x="532" y="65" width="1" height="1" fill="#000"/><rect x="521" y="65" width="1" height="1" fill="#808080"/><rect x="523" y="65" width="1" height="1" fill="#808080"/><rect x="525" y="65" width="1" height="1" fill="#808080"/><rect x="527" y="65" width="1" height="1" fill="#808080"/><rect x="529" y="65" width="1" height="1" fill="#808080"/><rect x="531" y="65" width="1" height="1" fill="#808080"/><rect x="518" y="66" width="1" height="1" fill="#000"/><rect x="519" y="66" width="13" height="1" fill="#fff"/><rect x="532" y="66" width="1" height="1" fill="#000"/><rect x="520" y="66" width="1" height="1" fill="#808080"/><rect x="522" y="66" width="1" height="1" fill="#808080"/><rect x="524" y="66" width="1" height="1" fill="#808080"/><rect x="526" y="66" width="1" height="1" fill="#808080"/><rect x="528" y="66" width="1" height="1" fill="#808080"/><rect x="530" y="66" width="1" height="1" fill="#808080"/><rect x="518" y="67" width="1" height="1" fill="#000"/><rect x="519" y="67" width="13" height="1" fill="#fff"/><rect x="532" y="67" width="1" height="1" fill="#000"/><rect x="521" y="67" width="1" height="1" fill="#808080"/><rect x="523" y="67" width="1" height="1" fill="#808080"/><rect x="525" y="67" width="1" height="1" fill="#808080"/><rect x="527" y="67" width="1" height="1" fill="#808080"/><rect x="529" y="67" width="1" height="1" fill="#808080"/><rect x="531" y="67" width="1" height="1" fill="#808080"/><rect x="518" y="68" width="15" height="1" fill="#000"/><rect x="522" y="69" width="10" height="1" fill="#000"/><rect x="519" y="62" width="1" height="1" fill="#000"/><rect x="545" y="55" width="9" height="1" fill="#000"/><rect x="544" y="56" width="1" height="1" fill="#000"/><rect x="545" y="56" width="8" height="1" fill="#fff"/><rect x="553" y="56" width="1" height="1" fill="#000"/><rect x="544" y="57" width="1" height="1" fill="#000"/><rect x="545" y="57" width="8" height="1" fill="#fff"/><rect x="546" y="57" width="5" height="1" fill="#000"/><rect x="553" y="57" width="1" height="1" fill="#000"/><rect x="543" y="58" width="1" height="1" fill="#000"/><rect x="544" y="58" width="8" height="1" fill="#fff"/><rect x="552" y="58" width="1" height="1" fill="#000"/><rect x="543" y="59" width="1" height="1" fill="#000"/><rect x="544" y="59" width="8" height="1" fill="#fff"/><rect x="545" y="59" width="5" height="1" fill="#000"/><rect x="552" y="59" width="1" height="1" fill="#000"/><rect x="542" y="60" width="11" height="1" fill="#000"/><rect x="541" y="61" width="11" height="1" fill="#000"/><rect x="540" y="62" width="1" height="1" fill="#000"/><rect x="541" y="62" width="10" height="1" fill="#e8e4dc"/><rect x="540" y="63" width="12" height="1" fill="#000"/><rect x="540" y="64" width="1" height="1" fill="#000"/><rect x="541" y="64" width="10" height="1" fill="#e8e4dc"/><rect x="540" y="65" width="1" height="1" fill="#000"/><rect x="541" y="65" width="10" height="1" fill="#e8e4dc"/><rect x="546" y="65" width="4" height="1" fill="#ffff00"/><rect x="546" y="64" width="4" height="1" fill="#ffff00"/><rect x="540" y="66" width="12" height="1" fill="#000"/><rect x="541" y="67" width="1" height="1" fill="#000"/><rect x="542" y="67" width="9" height="1" fill="#e8e4dc"/><rect x="541" y="68" width="12" height="1" fill="#000"/><rect x="551" y="60" width="1" height="1" fill="#c0c0c0"/><rect x="552" y="60" width="1" height="1" fill="#000"/><rect x="553" y="60" width="1" height="1" fill="#c0c0c0"/><rect x="554" y="60" width="1" height="1" fill="#000"/><rect x="551" y="61" width="1" height="1" fill="#000"/><rect x="552" y="61" width="1" height="1" fill="#c0c0c0"/><rect x="553" y="61" width="1" height="1" fill="#000"/><rect x="554" y="61" width="1" height="1" fill="#c0c0c0"/><rect x="551" y="62" width="1" height="1" fill="#c0c0c0"/><rect x="552" y="62" width="1" height="1" fill="#000"/><rect x="553" y="62" width="1" height="1" fill="#c0c0c0"/><rect x="554" y="62" width="1" height="1" fill="#000"/><rect x="551" y="63" width="1" height="1" fill="#000"/><rect x="552" y="63" width="1" height="1" fill="#c0c0c0"/><rect x="553" y="63" width="1" height="1" fill="#000"/><rect x="554" y="63" width="1" height="1" fill="#c0c0c0"/><rect x="551" y="64" width="1" height="1" fill="#c0c0c0"/><rect x="552" y="64" width="1" height="1" fill="#000"/><rect x="553" y="64" width="1" height="1" fill="#c0c0c0"/><rect x="554" y="64" width="1" height="1" fill="#000"/><rect x="551" y="65" width="1" height="1" fill="#000"/><rect x="552" y="65" width="1" height="1" fill="#c0c0c0"/><rect x="553" y="65" width="1" height="1" fill="#000"/><rect x="554" y="65" width="1" height="1" fill="#c0c0c0"/><rect x="551" y="66" width="1" height="1" fill="#c0c0c0"/><rect x="552" y="66" width="1" height="1" fill="#000"/><rect x="553" y="66" width="1" height="1" fill="#c0c0c0"/><rect x="554" y="66" width="1" height="1" fill="#000"/><rect x="551" y="67" width="1" height="1" fill="#000"/><rect x="552" y="67" width="1" height="1" fill="#c0c0c0"/><rect x="553" y="67" width="1" height="1" fill="#000"/><rect x="554" y="67" width="1" height="1" fill="#c0c0c0"/><rect x="551" y="68" width="1" height="1" fill="#c0c0c0"/><rect x="552" y="68" width="1" height="1" fill="#000"/><rect x="553" y="68" width="1" height="1" fill="#c0c0c0"/><rect x="554" y="68" width="1" height="1" fill="#000"/><rect x="563" y="54" width="1" height="18" fill="#808080"/><rect x="564" y="54" width="1" height="18" fill="#fff"/><rect x="577" y="55" width="3" height="1" fill="#000"/><rect x="576" y="56" width="1" height="1" fill="#000"/><rect x="577" y="56" width="2" height="1" fill="#000"/><rect x="579" y="56" width="1" height="1" fill="#000"/><rect x="580" y="56" width="1" height="1" fill="#f00"/><rect x="580" y="57" width="1" height="1" fill="#f00"/><rect x="577" y="56" width="1" height="1" fill="#000"/><rect x="578" y="56" width="1" height="1" fill="#ffff00"/><rect x="579" y="56" width="1" height="1" fill="#000"/><rect x="580" y="56" width="1" height="1" fill="#000"/><rect x="576" y="57" width="1" height="1" fill="#000"/><rect x="577" y="57" width="1" height="1" fill="#ffff00"/><rect x="578" y="57" width="1" height="1" fill="#f00"/><rect x="579" y="57" width="1" height="1" fill="#000"/><rect x="576" y="58" width="1" height="1" fill="#000"/><rect x="577" y="58" width="1" height="1" fill="#ffff00"/><rect x="578" y="58" width="1" height="1" fill="#000"/><rect x="579" y="58" width="1" height="1" fill="#000"/><rect x="575" y="59" width="1" height="1" fill="#000"/><rect x="576" y="59" width="1" height="1" fill="#ffff00"/><rect x="577" y="59" width="1" height="1" fill="#f00"/><rect x="578" y="59" width="1" height="1" fill="#000"/><rect x="575" y="60" width="1" height="1" fill="#000"/><rect x="576" y="60" width="1" height="1" fill="#ffff00"/><rect x="577" y="60" width="1" height="1" fill="#000"/><rect x="578" y="60" width="1" height="1" fill="#000"/><rect x="574" y="61" width="1" height="1" fill="#000"/><rect x="575" y="61" width="1" height="1" fill="#ffff00"/><rect x="576" y="61" width="1" height="1" fill="#f00"/><rect x="577" y="61" width="1" height="1" fill="#000"/><rect x="574" y="62" width="1" height="1" fill="#000"/><rect x="575" y="62" width="1" height="1" fill="#ffff00"/><rect x="576" y="62" width="1" height="1" fill="#000"/><rect x="577" y="62" width="1" height="1" fill="#000"/><rect x="573" y="63" width="1" height="1" fill="#000"/><rect x="574" y="63" width="1" height="1" fill="#ffff00"/><rect x="575" y="63" width="1" height="1" fill="#f00"/><rect x="576" y="63" width="1" height="1" fill="#000"/><rect x="573" y="64" width="1" height="1" fill="#000"/><rect x="574" y="64" width="1" height="1" fill="#ffff00"/><rect x="575" y="64" width="1" height="1" fill="#000"/><rect x="576" y="64" width="1" height="1" fill="#000"/><rect x="572" y="65" width="1" height="1" fill="#000"/><rect x="573" y="65" width="1" height="1" fill="#ffff00"/><rect x="574" y="65" width="1" height="1" fill="#f00"/><rect x="575" y="65" width="1" height="1" fill="#000"/><rect x="573" y="64" width="1" height="1" fill="#000"/><rect x="573" y="65" width="3" height="1" fill="#000"/><rect x="573" y="66" width="2" height="1" fill="#000"/><rect x="573" y="68" width="14" height="1" fill="#0000ff"/><rect x="573" y="67" width="1" height="1" fill="#000"/><rect x="601" y="55" width="1" height="7" fill="#000"/><path d="M594.5 62.5 H608.5 L601.5 69.5 Z" fill="#dcdce4" stroke="#000" stroke-width="1.3"/><path d="M596.5 63.8 H606.5 L601.5 68.5" fill="none" stroke="#808000" stroke-width="0.9"/><rect x="617.6" y="56.6" width="13.8" height="8.8" rx="1.5" fill="#e4e4ec" stroke="#000" stroke-width="1.3"/><rect x="618.5" y="57.5" width="12" height="7" fill="none" stroke="#808000" stroke-width="0.8"/><path d="M622 63.5 V59.5 L623 58.3 H625.5 L626.5 59.5 V63.5 M622.5 61.5 H626" fill="none" stroke="#000" stroke-width="1.4"/><rect x="624" y="66" width="1" height="5" fill="#000"/><path d="M647.5 55.5 L653 59.5 L643 64.5 L648 67.5 V70" fill="none" stroke="#000" stroke-width="1.5"/><rect x="670" y="55" width="1.2" height="6" fill="#000"/><rect x="670" y="65" width="1.2" height="5" fill="#000"/><rect x="665" y="60.8" width="11" height="1.5" fill="#000"/><rect x="665" y="63.8" width="11" height="1.5" fill="#000"/><path d="M691 55.8 Q696.3 56 696 59.5 Q695.5 62.6 691.5 62.6 Q696.3 63 696 66.5 Q695.5 69.5 691 69.4" fill="none" stroke="#000" stroke-width="1.4"/><path d="M710.5 58.6 H724.5 L717.5 65.5 Z" fill="#cfcfcf" stroke="#000" stroke-width="1.3"/><rect x="717" y="55" width="1.2" height="4" fill="#000"/><rect x="717" y="65" width="1.2" height="5" fill="#000"/><rect x="710" y="66" width="15" height="1.3" fill="#000"/><path d="M735.6 57.6 H740.5 Q744.6 59 744.6 62.6 Q744.6 66 740.5 67.4 H735.6 Z" fill="#c8c8c8" stroke="#000" stroke-width="1.3"/><path d="M736.5 58.5 V66.5" stroke="#e8e8e8" stroke-width="1"/><rect x="732" y="59" width="3" height="1.2" fill="#000"/><rect x="732" y="65" width="3" height="1.2" fill="#000"/><rect x="745" y="62" width="3" height="1.2" fill="#000"/><g transform="translate(752,53)"><path d="M8.5 16.5 L3 10.5 L4 8.8 H6 L7 9.8 L7 8 L5.2 3.5 L6 2.2 H8 L10.5 7.5 L12 3.5 L13 2.2 H15 L17 5 L18.5 7.5 V9.5 L15 14 V16.5 Z" fill="#fff" stroke="#000" stroke-width="1.25" stroke-linejoin="round"/><path d="M13.5 6.5 L12.3 9 M16.5 7.5 L15.5 9.5" stroke="#000" stroke-width="1"/><rect x="15" y="10" width="1" height="1" fill="#008080"/></g><g transform="translate(752,53)"><path d="M30.5 16 V12.5 L27.5 9 V8 L29 7 H30.5 L31 4.5 L32.5 4 H35.5 L37 5.5 L38.5 6 L39.5 7.5 V10.5 L36.5 13.5 V15.8 Z" fill="#fff" stroke="#000" stroke-width="1.25" stroke-linejoin="round"/><path d="M33.5 5 V8.5 M36.5 5.5 V8.5 M31 7.5 L31.7 9.5" stroke="#000" stroke-width="1"/></g><path d="M804.5 60.5 A5.5 5.5 0 1 1 807 68.5" fill="none" stroke="#000" stroke-width="1.4" stroke-dasharray="1.6 0.6"/><path d="M806 57.5 A5.5 5.5 0 0 1 813 58.5" fill="none" stroke="#808000" stroke-width="1.2"/><path d="M801.5 59 V64 H806.5 Z" fill="#000"/><path d="M835 60.5 A5.5 5.5 0 1 0 832.5 68.5" fill="none" stroke="#808080" stroke-width="1.3" stroke-dasharray="1.6 0.6"/><path d="M827 66 A5.5 5.5 0 0 0 832 69" fill="none" stroke="#fff" stroke-width="1"/><path d="M839.5 59 V64 H834.5 Z" fill="#808080"/><path d="M848 61.5 H852.5 M848.5 61.5 V69.5 M848 65.5 H851.5 M848 69.5 H852.5" fill="none" stroke="#808080" stroke-width="1.6"/><path d="M854 64 H863.5 M855 64 V68 M859 64 V68 M863 64 V68" fill="none" stroke="#808080" stroke-width="1.6"/><path d="M849.5 58.5 L852.5 55.5 H859 L861 57.5" fill="none" stroke="#808080" stroke-width="1.1"/><path d="M858.5 58.5 H862 V55" fill="none" stroke="#808080" stroke-width="1.3"/><path d="M848 70.5 H853 M855 69.5 H864" stroke="#fff"/><path d="M871 61.5 H875.5 M871.5 61.5 V69.5 M871 65.5 H874.5 M871 69.5 H875.5" fill="none" stroke="#808080" stroke-width="1.6"/><path d="M881 61.5 H885.5 M885 61.5 V69.5 M882 65.5 H885.5 M881 69.5 H885.5" fill="none" stroke="#808080" stroke-width="1.6"/><path d="M872.5 58.5 L875.5 55.5 H882 L884 57.5" fill="none" stroke="#808080" stroke-width="1.1"/><path d="M881.5 58.5 H885 V55" fill="none" stroke="#808080" stroke-width="1.3"/><path d="M871 70.5 H876 M881 70.5 H887" stroke="#fff"/><text x="893" y="68" font-family="Liberation Serif" font-style="italic" font-weight="bold" font-size="14" fill="#000">Aa</text><text x="916.5" y="65.5" font-family="Liberation Serif" font-size="12" fill="#000" stroke="#000" stroke-width="0.25">.op</text><rect x="942" y="49" width="1" height="28" fill="#808080"/><rect x="943" y="49" width="1" height="28" fill="#fff"/></svg>
<svg style="position:absolute;left:0;top:0" width="1650" height="993"><g shape-rendering="crispEdges"><rect x="2" y="77" width="125" height="1" fill="#fff"/><rect x="1" y="78" width="1" height="22" fill="#fff"/><rect x="126" y="78" width="1" height="21" fill="#808080"/><rect x="127" y="78" width="1" height="21" fill="#404040"/><rect x="128" y="79" width="124" height="1" fill="#fff"/><rect x="251" y="80" width="1" height="18" fill="#808080"/><rect x="252" y="80" width="1" height="19" fill="#404040"/><rect x="128" y="98" width="1520" height="1" fill="#fff"/><text x="30" y="92" font-family="Liberation Sans" font-size="12.8" fill="#000">isource-002.asc</text><text x="154" y="93" font-family="Liberation Sans" font-size="13" fill="#000">isource-002.raw</text><rect x="0" y="104" width="1650" height="1" fill="#808080"/><rect x="0" y="105" width="1650" height="1" fill="#404040"/><rect x="0" y="104" width="1" height="869" fill="#808080"/><rect x="1" y="105" width="1" height="868" fill="#404040"/><rect x="0" y="972" width="1650" height="1" fill="#d4d0c8"/><rect x="0" y="973" width="1650" height="1" fill="#fff"/><rect x="1648" y="105" width="1" height="868" fill="#d4d0c8"/><rect x="1649" y="104" width="1" height="870" fill="#fff"/><rect x="2" y="106" width="823" height="866" fill="#d4d0c8"/><rect x="3" y="107" width="821" height="1" fill="#fff"/><rect x="3" y="107" width="1" height="864" fill="#fff"/><rect x="2" y="971" width="823" height="1" fill="#404040"/><rect x="824" y="106" width="1" height="866" fill="#404040"/><rect x="3" y="970" width="821" height="1" fill="#808080"/><rect x="823" y="107" width="1" height="864" fill="#808080"/><rect x="6" y="129" width="815" height="1" fill="#808080"/><rect x="6" y="129" width="1" height="840" fill="#808080"/><rect x="7" y="130" width="813" height="1" fill="#404040"/><rect x="7" y="130" width="1" height="838" fill="#404040"/><rect x="6" y="968" width="815" height="1" fill="#fff"/><rect x="820" y="129" width="1" height="840" fill="#fff"/><defs><linearGradient id="gA" x1="0" x2="1"><stop offset="0" stop-color="#0a246a"/><stop offset="1" stop-color="#a6caf0"/></linearGradient><linearGradient id="gI" x1="0" x2="1"><stop offset="0" stop-color="#808080"/><stop offset="1" stop-color="#c0c0c0"/></linearGradient></defs><rect x="6" y="110" width="815" height="18" fill="url(#gA)"/><path d="M19.5 111.5 L14.5 117 V122 M16 122.5 L18.5 124 L19.5 126" fill="none" stroke="#000" stroke-width="1.4"/><text x="26" y="124" font-family="Liberation Sans" font-weight="bold" font-size="11.8" fill="#fff">isource-002.asc</text><rect x="769" y="112" width="16" height="14" fill="#d4d0c8"/><rect x="769" y="112" width="15" height="1" fill="#fff"/><rect x="769" y="112" width="1" height="13" fill="#fff"/><rect x="769" y="125" width="16" height="1" fill="#404040"/><rect x="784" y="112" width="1" height="14" fill="#404040"/><rect x="770" y="124" width="14" height="1" fill="#808080"/><rect x="783" y="113" width="1" height="12" fill="#808080"/><rect x="773" y="121" width="6" height="2" fill="#000"/><rect x="785" y="112" width="16" height="14" fill="#d4d0c8"/><rect x="785" y="112" width="15" height="1" fill="#fff"/><rect x="785" y="112" width="1" height="13" fill="#fff"/><rect x="785" y="125" width="16" height="1" fill="#404040"/><rect x="800" y="112" width="1" height="14" fill="#404040"/><rect x="786" y="124" width="14" height="1" fill="#808080"/><rect x="799" y="113" width="1" height="12" fill="#808080"/><rect x="788" y="114" width="9" height="9" fill="#000"/><rect x="789" y="116" width="7" height="6" fill="#d4d0c8"/><rect x="803" y="112" width="16" height="14" fill="#d4d0c8"/><rect x="803" y="112" width="15" height="1" fill="#fff"/><rect x="803" y="112" width="1" height="13" fill="#fff"/><rect x="803" y="125" width="16" height="1" fill="#404040"/><rect x="818" y="112" width="1" height="14" fill="#404040"/><rect x="804" y="124" width="14" height="1" fill="#808080"/><rect x="817" y="113" width="1" height="12" fill="#808080"/><path d="M807.2 115.2 L814.3 122.3 M814.3 115.2 L807.2 122.3" stroke="#000" stroke-width="1.6"/><rect x="8" y="131" width="811" height="835" fill="#c1cbe7"/><rect x="825" y="106" width="823" height="866" fill="#d4d0c8"/><rect x="826" y="107" width="821" height="1" fill="#fff"/><rect x="826" y="107" width="1" height="864" fill="#fff"/><rect x="825" y="971" width="823" height="1" fill="#404040"/><rect x="1647" y="106" width="1" height="866" fill="#404040"/><rect x="826" y="970" width="821" height="1" fill="#808080"/><rect x="1646" y="107" width="1" height="864" fill="#808080"/><rect x="829" y="129" width="815" height="1" fill="#808080"/><rect x="829" y="129" width="1" height="840" fill="#808080"/><rect x="830" y="130" width="813" height="1" fill="#404040"/><rect x="830" y="130" width="1" height="838" fill="#404040"/><rect x="829" y="968" width="815" height="1" fill="#fff"/><rect x="1643" y="129" width="1" height="840" fill="#fff"/><rect x="829" y="110" width="815" height="18" fill="url(#gI)"/><rect x="831" y="111" width="16" height="15" fill="#c0c0c0"/><path d="M831.5 115.5 L835.5 112 L839.5 115.5 L843.5 112 L847 115.5" fill="none" stroke="#0000ff" stroke-width="1"/><rect x="833" y="118" width="3" height="1" fill="#f00"/><rect x="838" y="119" width="1" height="1" fill="#f00"/><rect x="842" y="120" width="2" height="1" fill="#f00"/><rect x="836" y="123" width="1" height="1" fill="#00f"/><rect x="842" y="123" width="1" height="1" fill="#00f"/><rect x="831" y="125" width="3" height="2" fill="#000"/><rect x="835" y="125" width="3" height="2" fill="#000"/><rect x="839" y="125" width="3" height="2" fill="#000"/><rect x="843" y="125" width="4" height="2" fill="#000"/><rect x="831" y="120" width="1" height="1" fill="#000"/><rect x="831" y="115" width="1" height="1" fill="#000"/><text x="848" y="124" font-family="Liberation Sans" font-weight="bold" font-size="11.8" fill="#d4d0c8">isource-002.raw</text><rect x="1592" y="112" width="16" height="14" fill="#d4d0c8"/><rect x="1592" y="112" width="15" height="1" fill="#fff"/><rect x="1592" y="112" width="1" height="13" fill="#fff"/><rect x="1592" y="125" width="16" height="1" fill="#404040"/><rect x="1607" y="112" width="1" height="14" fill="#404040"/><rect x="1593" y="124" width="14" height="1" fill="#808080"/><rect x="1606" y="113" width="1" height="12" fill="#808080"/><rect x="1596" y="121" width="6" height="2" fill="#000"/><rect x="1608" y="112" width="16" height="14" fill="#d4d0c8"/><rect x="1608" y="112" width="15" height="1" fill="#fff"/><rect x="1608" y="112" width="1" height="13" fill="#fff"/><rect x="1608" y="125" width="16" height="1" fill="#404040"/><rect x="1623" y="112" width="1" height="14" fill="#404040"/><rect x="1609" y="124" width="14" height="1" fill="#808080"/><rect x="1622" y="113" width="1" height="12" fill="#808080"/><rect x="1611" y="114" width="9" height="9" fill="#000"/><rect x="1612" y="116" width="7" height="6" fill="#d4d0c8"/><rect x="1626" y="112" width="16" height="14" fill="#d4d0c8"/><rect x="1626" y="112" width="15" height="1" fill="#fff"/><rect x="1626" y="112" width="1" height="13" fill="#fff"/><rect x="1626" y="125" width="16" height="1" fill="#404040"/><rect x="1641" y="112" width="1" height="14" fill="#404040"/><rect x="1627" y="124" width="14" height="1" fill="#808080"/><rect x="1640" y="113" width="1" height="12" fill="#808080"/><path d="M1630.2 115.2 L1637.3 122.3 M1637.3 115.2 L1630.2 122.3" stroke="#000" stroke-width="1.6"/><rect x="831" y="131" width="811" height="835" fill="#000"/><rect x="0" y="992" width="1650" height="1" fill="#3a5580"/><rect x="1599" y="976" width="50" height="1" fill="#808080"/><rect x="1599" y="976" width="1" height="15" fill="#808080"/><path d="M1647 980 L1637 990 M1647 983 L1640 990 M1647 986 L1643 990" stroke="#808080" stroke-width="1"/><path d="M1648 981 L1638 991 M1648 984 L1641 991 M1648 987 L1644 991" stroke="#fff" stroke-width="1"/></g></svg>
<svg style="position:absolute;left:8px;top:131px" width="811" height="835" viewBox="8 131 811 835"><g shape-rendering="crispEdges"><rect x="106" y="179" width="623" height="1" fill="#0000ff"/><rect x="106" y="179" width="1" height="56" fill="#0000ff"/><ellipse cx="106.5" cy="268.1" rx="26.6" ry="27.3" fill="none" stroke="#000080" stroke-width="1"/><rect x="106" y="233" width="1" height="8" fill="#000080"/><rect x="106" y="295" width="1" height="8" fill="#000080"/><rect x="100" y="251" width="14" height="1" fill="#000080"/><rect x="106" y="244" width="1" height="15" fill="#000080"/><rect x="100" y="285" width="14" height="1" fill="#000080"/><rect x="106" y="302" width="1" height="71" fill="#0000ff"/><rect x="106" y="372" width="249" height="1" fill="#0000ff"/><rect x="216" y="179" width="1" height="29" fill="#0000ff"/><ellipse cx="216.5" cy="241.1" rx="26.6" ry="27.3" fill="none" stroke="#000080" stroke-width="1"/><rect x="216" y="206" width="1" height="8" fill="#000080"/><rect x="216" y="268" width="1" height="8" fill="#000080"/><rect x="210" y="224" width="14" height="1" fill="#000080"/><rect x="216" y="217" width="1" height="15" fill="#000080"/><rect x="210" y="258" width="14" height="1" fill="#000080"/><rect x="216" y="275" width="1" height="15" fill="#0000ff"/><rect x="313" y="179" width="1" height="28" fill="#0000ff"/><rect x="304" y="213" width="1" height="57" fill="#000080"/><rect x="323" y="213" width="1" height="57" fill="#000080"/><rect x="304" y="213" width="20" height="1" fill="#000080"/><rect x="304" y="269" width="20" height="1" fill="#000080"/><rect x="313" y="206" width="1" height="8" fill="#000080"/><rect x="313" y="269" width="1" height="8" fill="#000080"/><rect x="313" y="276" width="1" height="97" fill="#0000ff"/><rect x="382" y="179" width="1" height="152" fill="#0000ff"/><rect x="382" y="386" width="1" height="14" fill="#0000ff"/><path d="M355.5 331.5 L410.5 358.5 L355.5 386.5 Z" fill="none" stroke="#000080" stroke-width="1.05"/><rect x="358" y="345" width="8" height="1" fill="#000080"/><rect x="358" y="372" width="8" height="1" fill="#000080"/><rect x="362" y="369" width="1" height="7" fill="#000080"/><rect x="382" y="331" width="1" height="14" fill="#000080"/><rect x="382" y="373" width="1" height="14" fill="#000080"/><rect x="386" y="341" width="8" height="1" fill="#000080"/><rect x="389" y="338" width="1" height="8" fill="#000080"/><rect x="386" y="376" width="8" height="1" fill="#000080"/><rect x="341" y="276" width="1" height="70" fill="#0000ff"/><rect x="341" y="345" width="14" height="1" fill="#0000ff"/><rect x="341" y="276" width="125" height="1" fill="#0000ff"/><rect x="438" y="276" width="1" height="14" fill="#0000ff"/><rect x="424" y="314" width="29" height="1" fill="#000080"/><rect x="424" y="320" width="29" height="1" fill="#000080"/><rect x="438" y="290" width="1" height="25" fill="#000080"/><rect x="438" y="320" width="1" height="25" fill="#000080"/><rect x="438" y="345" width="1" height="14" fill="#0000ff"/><rect x="410" y="358" width="56" height="1" fill="#0000ff"/><rect x="472" y="349" width="57" height="1" fill="#000080"/><rect x="472" y="368" width="57" height="1" fill="#000080"/><rect x="472" y="349" width="1" height="20" fill="#000080"/><rect x="528" y="349" width="1" height="20" fill="#000080"/><rect x="465" y="358" width="8" height="1" fill="#000080"/><rect x="528" y="358" width="8" height="1" fill="#000080"/><rect x="535" y="358" width="14" height="1" fill="#0000ff"/><rect x="472" y="266" width="57" height="1" fill="#000080"/><rect x="472" y="285" width="57" height="1" fill="#000080"/><rect x="472" y="266" width="1" height="20" fill="#000080"/><rect x="528" y="266" width="1" height="20" fill="#000080"/><rect x="465" y="276" width="8" height="1" fill="#000080"/><rect x="528" y="276" width="8" height="1" fill="#000080"/><rect x="535" y="276" width="56" height="1" fill="#0000ff"/><rect x="590" y="179" width="1" height="15" fill="#0000ff"/><rect x="580" y="200" width="1" height="56" fill="#000080"/><rect x="599" y="200" width="1" height="56" fill="#000080"/><rect x="580" y="200" width="20" height="1" fill="#000080"/><rect x="580" y="255" width="20" height="1" fill="#000080"/><rect x="590" y="193" width="1" height="8" fill="#000080"/><rect x="590" y="255" width="1" height="8" fill="#000080"/><rect x="590" y="262" width="1" height="83" fill="#0000ff"/><rect x="548" y="358" width="8" height="1" fill="#000080"/><rect x="555" y="358" width="1" height="56" fill="#000080"/><rect x="562" y="352" width="1" height="13" fill="#000080"/><rect x="562" y="379" width="1" height="15" fill="#000080"/><rect x="562" y="407" width="1" height="14" fill="#000080"/><rect x="562" y="358" width="29" height="1" fill="#000080"/><rect x="590" y="345" width="1" height="42" fill="#000080"/><rect x="562" y="386" width="8" height="1" fill="#000080"/><rect x="569" y="383" width="1" height="8" fill="#000080"/><line x1="569.5" y1="383.5" x2="590.5" y2="386.5" stroke="#000080" stroke-width="1.0"/><line x1="569.5" y1="390.5" x2="590.5" y2="386.5" stroke="#000080" stroke-width="1.0"/><rect x="562" y="414" width="29" height="1" fill="#000080"/><rect x="590" y="414" width="1" height="14" fill="#000080"/><rect x="590" y="428" width="1" height="55" fill="#0000ff"/><rect x="590" y="455" width="41" height="1" fill="#0000ff"/><rect x="638" y="446" width="56" height="1" fill="#000080"/><rect x="638" y="465" width="56" height="1" fill="#000080"/><rect x="638" y="446" width="1" height="20" fill="#000080"/><rect x="693" y="446" width="1" height="20" fill="#000080"/><rect x="631" y="455" width="8" height="1" fill="#000080"/><rect x="693" y="455" width="8" height="1" fill="#000080"/><rect x="700" y="455" width="57" height="1" fill="#0000ff"/><path d="M756.5 445.5 L766.5 455.5 L756.5 466" fill="none" stroke="#0000ff" stroke-width="1.1"/><rect x="756" y="445" width="1" height="22" fill="#0000ff"/><rect x="728" y="179" width="1" height="83" fill="#0000ff"/><ellipse cx="728.5" cy="296.1" rx="26.6" ry="27.3" fill="none" stroke="#000080" stroke-width="1"/><rect x="728" y="261" width="1" height="8" fill="#000080"/><rect x="728" y="323" width="1" height="8" fill="#000080"/><rect x="722" y="279" width="14" height="1" fill="#000080"/><rect x="728" y="272" width="1" height="15" fill="#000080"/><rect x="722" y="313" width="14" height="1" fill="#000080"/><rect x="728" y="330" width="1" height="222" fill="#0000ff"/><ellipse cx="728.5" cy="586.1" rx="26.6" ry="27.3" fill="none" stroke="#000080" stroke-width="1"/><rect x="728" y="551" width="1" height="8" fill="#000080"/><rect x="728" y="613" width="1" height="8" fill="#000080"/><rect x="722" y="569" width="14" height="1" fill="#000080"/><rect x="728" y="562" width="1" height="15" fill="#000080"/><rect x="722" y="603" width="14" height="1" fill="#000080"/><rect x="728" y="620" width="1" height="140" fill="#0000ff"/><rect x="590" y="483" width="1" height="15" fill="#000080"/><rect x="562" y="497" width="29" height="1" fill="#000080"/><rect x="562" y="490" width="1" height="15" fill="#000080"/><rect x="562" y="517" width="1" height="15" fill="#000080"/><rect x="562" y="545" width="1" height="15" fill="#000080"/><rect x="562" y="524" width="3" height="1" fill="#000080"/><rect x="583" y="521" width="1" height="8" fill="#000080"/><line x1="583.5" y1="521.5" x2="563.5" y2="524.5" stroke="#000080" stroke-width="1.0"/><line x1="583.5" y1="528.5" x2="563.5" y2="524.5" stroke="#000080" stroke-width="1.0"/><rect x="583" y="524" width="8" height="1" fill="#000080"/><rect x="590" y="524" width="1" height="29" fill="#000080"/><rect x="562" y="552" width="29" height="1" fill="#000080"/><rect x="590" y="552" width="1" height="14" fill="#000080"/><rect x="590" y="566" width="1" height="96" fill="#0000ff"/><rect x="555" y="497" width="1" height="56" fill="#000080"/><rect x="548" y="552" width="8" height="1" fill="#000080"/><rect x="535" y="552" width="14" height="1" fill="#0000ff"/><path d="M355.5 524.5 L410.5 552.5 L355.5 580.5 Z" fill="none" stroke="#000080" stroke-width="1.05"/><rect x="358" y="538" width="8" height="1" fill="#000080"/><rect x="358" y="566" width="8" height="1" fill="#000080"/><rect x="362" y="563" width="1" height="7" fill="#000080"/><rect x="382" y="524" width="1" height="14" fill="#000080"/><rect x="382" y="567" width="1" height="14" fill="#000080"/><rect x="386" y="535" width="8" height="1" fill="#000080"/><rect x="389" y="531" width="1" height="8" fill="#000080"/><rect x="386" y="569" width="8" height="1" fill="#000080"/><rect x="382" y="510" width="1" height="14" fill="#0000ff"/><rect x="382" y="580" width="1" height="180" fill="#0000ff"/><rect x="106" y="566" width="249" height="1" fill="#0000ff"/><rect x="327" y="538" width="1" height="112" fill="#0000ff"/><rect x="327" y="538" width="28" height="1" fill="#0000ff"/><rect x="327" y="649" width="139" height="1" fill="#0000ff"/><rect x="410" y="552" width="56" height="1" fill="#0000ff"/><rect x="472" y="542" width="57" height="1" fill="#000080"/><rect x="472" y="561" width="57" height="1" fill="#000080"/><rect x="472" y="542" width="1" height="20" fill="#000080"/><rect x="528" y="542" width="1" height="20" fill="#000080"/><rect x="465" y="552" width="8" height="1" fill="#000080"/><rect x="528" y="552" width="8" height="1" fill="#000080"/><rect x="438" y="552" width="1" height="14" fill="#0000ff"/><rect x="424" y="590" width="29" height="1" fill="#000080"/><rect x="424" y="597" width="29" height="1" fill="#000080"/><rect x="438" y="566" width="1" height="25" fill="#000080"/><rect x="438" y="597" width="1" height="25" fill="#000080"/><rect x="438" y="621" width="1" height="29" fill="#0000ff"/><rect x="472" y="639" width="57" height="1" fill="#000080"/><rect x="472" y="658" width="57" height="1" fill="#000080"/><rect x="472" y="639" width="1" height="20" fill="#000080"/><rect x="528" y="639" width="1" height="20" fill="#000080"/><rect x="465" y="649" width="8" height="1" fill="#000080"/><rect x="528" y="649" width="8" height="1" fill="#000080"/><rect x="535" y="649" width="56" height="1" fill="#0000ff"/><rect x="580" y="669" width="1" height="57" fill="#000080"/><rect x="599" y="669" width="1" height="57" fill="#000080"/><rect x="580" y="669" width="20" height="1" fill="#000080"/><rect x="580" y="725" width="20" height="1" fill="#000080"/><rect x="590" y="662" width="1" height="8" fill="#000080"/><rect x="590" y="725" width="1" height="8" fill="#000080"/><rect x="590" y="732" width="1" height="28" fill="#0000ff"/><rect x="106" y="759" width="623" height="1" fill="#0000ff"/><rect x="106" y="566" width="1" height="97" fill="#0000ff"/><ellipse cx="106.5" cy="696.1" rx="26.6" ry="27.3" fill="none" stroke="#000080" stroke-width="1"/><rect x="106" y="661" width="1" height="8" fill="#000080"/><rect x="106" y="723" width="1" height="8" fill="#000080"/><rect x="100" y="679" width="14" height="1" fill="#000080"/><rect x="106" y="672" width="1" height="15" fill="#000080"/><rect x="100" y="713" width="14" height="1" fill="#000080"/><rect x="106" y="730" width="1" height="30" fill="#0000ff"/><rect x="216" y="620" width="1" height="30" fill="#0000ff"/><ellipse cx="216.5" cy="683.1" rx="26.6" ry="27.3" fill="none" stroke="#000080" stroke-width="1"/><rect x="216" y="648" width="1" height="8" fill="#000080"/><rect x="216" y="710" width="1" height="8" fill="#000080"/><rect x="210" y="666" width="14" height="1" fill="#000080"/><rect x="216" y="659" width="1" height="15" fill="#000080"/><rect x="210" y="700" width="14" height="1" fill="#000080"/><rect x="216" y="717" width="1" height="43" fill="#0000ff"/><rect x="299" y="566" width="1" height="70" fill="#0000ff"/><rect x="290" y="642" width="1" height="56" fill="#000080"/><rect x="309" y="642" width="1" height="56" fill="#000080"/><rect x="290" y="642" width="20" height="1" fill="#000080"/><rect x="290" y="697" width="20" height="1" fill="#000080"/><rect x="299" y="635" width="1" height="8" fill="#000080"/><rect x="299" y="697" width="1" height="8" fill="#000080"/><rect x="299" y="704" width="1" height="56" fill="#0000ff"/><rect x="213" y="176" width="7" height="7" fill="#0000ff"/><rect x="310" y="176" width="7" height="7" fill="#0000ff"/><rect x="379" y="176" width="7" height="7" fill="#0000ff"/><rect x="587" y="176" width="7" height="7" fill="#0000ff"/><rect x="435" y="273" width="7" height="7" fill="#0000ff"/><rect x="587" y="273" width="7" height="7" fill="#0000ff"/><rect x="310" y="369" width="7" height="7" fill="#0000ff"/><rect x="435" y="355" width="7" height="7" fill="#0000ff"/><rect x="587" y="452" width="7" height="7" fill="#0000ff"/><rect x="725" y="452" width="7" height="7" fill="#0000ff"/><rect x="435" y="549" width="7" height="7" fill="#0000ff"/><rect x="296" y="563" width="7" height="7" fill="#0000ff"/><rect x="435" y="646" width="7" height="7" fill="#0000ff"/><rect x="587" y="646" width="7" height="7" fill="#0000ff"/><rect x="213" y="756" width="7" height="7" fill="#0000ff"/><rect x="296" y="756" width="7" height="7" fill="#0000ff"/><rect x="379" y="756" width="7" height="7" fill="#0000ff"/><rect x="587" y="756" width="7" height="7" fill="#0000ff"/><text font-family="Liberation Sans" shape-rendering="geometricPrecision" x="73" y="246" text-anchor="end" fill="#000" font-size="12" font-weight="bold">V6</text><text font-family="Liberation Sans" shape-rendering="geometricPrecision" x="169" y="218" text-anchor="start" fill="#000" font-size="12" font-weight="bold">V4</text><text font-family="Liberation Sans" shape-rendering="geometricPrecision" x="169" y="273" text-anchor="start" fill="#000" font-size="12" font-weight="bold">12</text><text font-family="Liberation Sans" shape-rendering="geometricPrecision" transform="translate(219.9,318) rotate(-90)" fill="#000" font-size="12" font-weight="bold" letter-spacing="0.4">+48V</text><text font-family="Liberation Sans" shape-rendering="geometricPrecision" x="299" y="232" text-anchor="end" fill="#000" font-size="12" font-weight="bold">R9</text><text font-family="Liberation Sans" shape-rendering="geometricPrecision" x="299" y="263" text-anchor="end" fill="#000" font-size="12" font-weight="bold">1Meg</text><text font-family="Liberation Sans" shape-rendering="geometricPrecision" x="445" y="301" text-anchor="start" fill="#000" font-size="12" font-weight="bold">C2</text><text font-family="Liberation Sans" shape-rendering="geometricPrecision" x="446" y="343" text-anchor="start" fill="#000" font-size="12" font-weight="bold">1n</text><text font-family="Liberation Sans" shape-rendering="geometricPrecision" x="499.5" y="263" text-anchor="middle" fill="#000" font-size="12" font-weight="bold">R5</text><text font-family="Liberation Sans" shape-rendering="geometricPrecision" x="499.5" y="298" text-anchor="middle" fill="#000" font-size="12" font-weight="bold">43k</text><text font-family="Liberation Sans" shape-rendering="geometricPrecision" x="576" y="218" text-anchor="end" fill="#000" font-size="12" font-weight="bold">R7</text><text font-family="Liberation Sans" shape-rendering="geometricPrecision" x="576" y="249" text-anchor="end" fill="#000" font-size="12" font-weight="bold">.47</text><text font-family="Liberation Sans" shape-rendering="geometricPrecision" x="676" y="176" text-anchor="start" fill="#000" font-size="12" font-weight="bold">+Ub</text><text font-family="Liberation Sans" shape-rendering="geometricPrecision" x="748" y="267" text-anchor="start" fill="#000" font-size="12" font-weight="bold">V5</text><text font-family="Liberation Sans" shape-rendering="geometricPrecision" x="748" y="336" text-anchor="start" fill="#000" font-size="12" font-weight="bold">60</text><text font-family="Liberation Sans" shape-rendering="geometricPrecision" x="396" y="336" text-anchor="start" fill="#000" font-size="12" font-weight="bold">U2</text><text font-family="Liberation Sans" shape-rendering="geometricPrecision" x="401" y="396" text-anchor="start" fill="#000" font-size="12" font-weight="bold">LM358</text><text font-family="Liberation Sans" shape-rendering="geometricPrecision" transform="translate(385.9,429) rotate(-90)" fill="#000" font-size="12" font-weight="bold" letter-spacing="0.4">+48V</text><text font-family="Liberation Sans" shape-rendering="geometricPrecision" x="500" y="346" text-anchor="middle" fill="#000" font-size="12" font-weight="bold">R8</text><text font-family="Liberation Sans" shape-rendering="geometricPrecision" x="500" y="380" text-anchor="middle" fill="#000" font-size="12" font-weight="bold">100</text><text font-family="Liberation Sans" shape-rendering="geometricPrecision" x="597" y="370" text-anchor="start" fill="#000" font-size="12" font-weight="bold">IRFP9240</text><text font-family="Liberation Sans" shape-rendering="geometricPrecision" x="597" y="405" text-anchor="start" fill="#000" font-size="12" font-weight="bold">M2</text><text font-family="Liberation Sans" shape-rendering="geometricPrecision" x="608" y="452" text-anchor="start" fill="#000" font-size="12" font-weight="bold">out</text><text font-family="Liberation Sans" shape-rendering="geometricPrecision" x="665.5" y="443" text-anchor="middle" fill="#000" font-size="12" font-weight="bold">R17</text><text font-family="Liberation Sans" shape-rendering="geometricPrecision" x="665.5" y="477" text-anchor="middle" fill="#000" font-size="12" font-weight="bold">20</text><text font-family="Liberation Sans" shape-rendering="geometricPrecision" x="596" y="515" text-anchor="start" fill="#000" font-size="12" font-weight="bold">M1</text><text font-family="Liberation Sans" shape-rendering="geometricPrecision" x="596" y="550" text-anchor="start" fill="#000" font-size="12" font-weight="bold">IRFP240</text><text font-family="Liberation Sans" shape-rendering="geometricPrecision" x="748" y="557" text-anchor="start" fill="#000" font-size="12" font-weight="bold">V3</text><text font-family="Liberation Sans" shape-rendering="geometricPrecision" x="748" y="626" text-anchor="start" fill="#000" font-size="12" font-weight="bold">60</text><text font-family="Liberation Sans" shape-rendering="geometricPrecision" transform="translate(385.9,510) rotate(-90)" fill="#000" font-size="12" font-weight="bold" letter-spacing="0.4">-48V</text><text font-family="Liberation Sans" shape-rendering="geometricPrecision" x="399" y="501" text-anchor="start" fill="#000" font-size="12" font-weight="bold">LM358</text><text font-family="Liberation Sans" shape-rendering="geometricPrecision" x="396" y="529" text-anchor="start" fill="#000" font-size="12" font-weight="bold">U1</text><text font-family="Liberation Sans" shape-rendering="geometricPrecision" x="420" y="549" text-anchor="start" fill="#000" font-size="12" font-weight="bold">Q</text><text font-family="Liberation Sans" shape-rendering="geometricPrecision" x="445" y="578" text-anchor="start" fill="#000" font-size="12" font-weight="bold">C1</text><text font-family="Liberation Sans" shape-rendering="geometricPrecision" x="445" y="619" text-anchor="start" fill="#000" font-size="12" font-weight="bold">1n</text><text font-family="Liberation Sans" shape-rendering="geometricPrecision" x="499.5" y="539" text-anchor="middle" fill="#000" font-size="12" font-weight="bold">R4</text><text font-family="Liberation Sans" shape-rendering="geometricPrecision" x="499.5" y="573" text-anchor="middle" fill="#000" font-size="12" font-weight="bold">100</text><text font-family="Liberation Sans" shape-rendering="geometricPrecision" x="499.5" y="636" text-anchor="middle" fill="#000" font-size="12" font-weight="bold">R1</text><text font-family="Liberation Sans" shape-rendering="geometricPrecision" x="499.5" y="670" text-anchor="middle" fill="#000" font-size="12" font-weight="bold">43k</text><text font-family="Liberation Sans" shape-rendering="geometricPrecision" x="44" y="547" text-anchor="start" fill="#000" font-size="12" font-weight="bold">PULSE(0 1.2 3 1 1 1 6)</text><text font-family="Liberation Sans" shape-rendering="geometricPrecision" x="202" y="543" text-anchor="start" fill="#0000c8" font-size="12" font-weight="bold">(+ Halbwelle)</text><text font-family="Liberation Sans" shape-rendering="geometricPrecision" x="248" y="563" text-anchor="start" fill="#000" font-size="12" font-weight="bold">in-n</text><text font-family="Liberation Sans" shape-rendering="geometricPrecision" x="58" y="674" text-anchor="start" fill="#000" font-size="12" font-weight="bold">V2</text><text font-family="Liberation Sans" shape-rendering="geometricPrecision" transform="translate(219.9,620) rotate(-90)" fill="#000" font-size="12" font-weight="bold" letter-spacing="0.4">-48V</text><text font-family="Liberation Sans" shape-rendering="geometricPrecision" x="169" y="661" text-anchor="start" fill="#000" font-size="12" font-weight="bold">V1</text><text font-family="Liberation Sans" shape-rendering="geometricPrecision" x="169" y="715" text-anchor="start" fill="#000" font-size="12" font-weight="bold">12</text><text font-family="Liberation Sans" shape-rendering="geometricPrecision" x="285" y="657" text-anchor="end" fill="#000" font-size="12" font-weight="bold">R6</text><text font-family="Liberation Sans" shape-rendering="geometricPrecision" x="285" y="688" text-anchor="end" fill="#000" font-size="12" font-weight="bold">1Meg</text><text font-family="Liberation Sans" shape-rendering="geometricPrecision" x="248" y="369" text-anchor="start" fill="#000" font-size="12" font-weight="bold">in-p</text><text font-family="Liberation Sans" shape-rendering="geometricPrecision" x="46" y="408" text-anchor="start" fill="#000" font-size="12" font-weight="bold">PULSE(0 1.2 6 1 1 1 12)</text><text font-family="Liberation Sans" shape-rendering="geometricPrecision" x="229" y="405" text-anchor="start" fill="#0000c8" font-size="12" font-weight="bold">(-Halbwelle)</text><text font-family="Liberation Sans" shape-rendering="geometricPrecision" x="576" y="685" text-anchor="end" fill="#000" font-size="12" font-weight="bold">R2</text><text font-family="Liberation Sans" shape-rendering="geometricPrecision" x="576" y="716" text-anchor="end" fill="#000" font-size="12" font-weight="bold">.47</text><text font-family="Liberation Sans" shape-rendering="geometricPrecision" x="691" y="756" text-anchor="start" fill="#000" font-size="12" font-weight="bold">-Ub</text><text font-family="Liberation Sans" shape-rendering="geometricPrecision" x="188" y="813" text-anchor="start" fill="#000" font-size="12" font-weight="bold">.meas lo avg I(R17)</text><text font-family="Liberation Sans" shape-rendering="geometricPrecision" x="203" y="840" text-anchor="start" fill="#000" font-size="12" font-weight="bold">.step param Utol 0 2 1</text><text font-family="Liberation Sans" shape-rendering="geometricPrecision" x="210" y="882" text-anchor="start" fill="#000" font-size="12" font-weight="bold">.opt plotwinsize=0</text><text font-family="Liberation Sans" shape-rendering="geometricPrecision" x="210" y="902" text-anchor="start" fill="#000" font-size="12" font-weight="bold">.lib LM358.lib</text><text font-family="Liberation Sans" shape-rendering="geometricPrecision" x="210" y="923" text-anchor="start" fill="#000" font-size="12" font-weight="bold">.lib IRFP9240.lib</text><text font-family="Liberation Sans" shape-rendering="geometricPrecision" x="348" y="861" text-anchor="start" fill="#0000c8" font-size="12" font-weight="bold">.param Uin 0</text><text font-family="Liberation Sans" shape-rendering="geometricPrecision" x="348" y="877" text-anchor="start" fill="#0000c8" font-size="12" font-weight="bold">.step param Utol 0 2 .2</text><text font-family="Liberation Sans" shape-rendering="geometricPrecision" x="348" y="892" text-anchor="start" fill="#0000c8" font-size="12" font-weight="bold">.step param R2 list .42 .47 .52</text><text font-family="Liberation Sans" shape-rendering="geometricPrecision" x="348" y="908" text-anchor="start" fill="#0000c8" font-size="12" font-weight="bold">.temp 15 75</text><text font-family="Liberation Sans" shape-rendering="geometricPrecision" x="604" y="833" text-anchor="start" fill="#0000c8" font-size="12" font-weight="bold">.param Uin 1.44</text><text font-family="Liberation Sans" shape-rendering="geometricPrecision" x="611" y="861" text-anchor="start" fill="#000" font-size="12" font-weight="bold">.tran 0 12 0 .5</text><text font-family="Liberation Sans" shape-rendering="geometricPrecision" x="576" y="923" text-anchor="start" fill="#0000c8" font-size="12" font-weight="bold">.step param Utol 0 2 .2</text><text font-family="Liberation Sans" shape-rendering="geometricPrecision" x="576" y="939" text-anchor="start" fill="#0000c8" font-size="12" font-weight="bold">.temp 15 75</text></g></svg>
<svg style="position:absolute;left:831px;top:131px" width="811" height="835" viewBox="831 131 811 835"><g shape-rendering="crispEdges"><line x1="871" y1="181.5" x2="1598" y2="181.5" stroke="#808080" stroke-width="1" stroke-dasharray="4 4"/><rect x="863" y="181" width="8" height="1" fill="#c0c0c0"/><rect x="1599" y="181" width="7" height="1" fill="#c0c0c0"/><line x1="871" y1="213.5" x2="1598" y2="213.5" stroke="#808080" stroke-width="1" stroke-dasharray="4 4"/><rect x="863" y="213" width="8" height="1" fill="#c0c0c0"/><rect x="1599" y="213" width="7" height="1" fill="#c0c0c0"/><line x1="871" y1="245.5" x2="1598" y2="245.5" stroke="#808080" stroke-width="1" stroke-dasharray="4 4"/><rect x="863" y="245" width="8" height="1" fill="#c0c0c0"/><rect x="1599" y="245" width="7" height="1" fill="#c0c0c0"/><line x1="871" y1="277.5" x2="1598" y2="277.5" stroke="#808080" stroke-width="1" stroke-dasharray="4 4"/><rect x="863" y="277" width="8" height="1" fill="#c0c0c0"/><rect x="1599" y="277" width="7" height="1" fill="#c0c0c0"/><line x1="871" y1="309.5" x2="1598" y2="309.5" stroke="#808080" stroke-width="1" stroke-dasharray="4 4"/><rect x="863" y="309" width="8" height="1" fill="#c0c0c0"/><rect x="1599" y="309" width="7" height="1" fill="#c0c0c0"/><line x1="871" y1="341.5" x2="1598" y2="341.5" stroke="#808080" stroke-width="1" stroke-dasharray="4 4"/><rect x="863" y="341" width="8" height="1" fill="#c0c0c0"/><rect x="1599" y="341" width="7" height="1" fill="#c0c0c0"/><line x1="871" y1="372.5" x2="1598" y2="372.5" stroke="#808080" stroke-width="1" stroke-dasharray="4 4"/><rect x="863" y="372" width="8" height="1" fill="#c0c0c0"/><rect x="1599" y="372" width="7" height="1" fill="#c0c0c0"/><line x1="871" y1="404.5" x2="1598" y2="404.5" stroke="#808080" stroke-width="1" stroke-dasharray="4 4"/><rect x="863" y="404" width="8" height="1" fill="#c0c0c0"/><rect x="1599" y="404" width="7" height="1" fill="#c0c0c0"/><line x1="871" y1="436.5" x2="1598" y2="436.5" stroke="#808080" stroke-width="1" stroke-dasharray="4 4"/><rect x="863" y="436" width="8" height="1" fill="#c0c0c0"/><rect x="1599" y="436" width="7" height="1" fill="#c0c0c0"/><line x1="871" y1="468.5" x2="1598" y2="468.5" stroke="#808080" stroke-width="1" stroke-dasharray="4 4"/><rect x="863" y="468" width="8" height="1" fill="#c0c0c0"/><rect x="1599" y="468" width="7" height="1" fill="#c0c0c0"/><line x1="871" y1="500.5" x2="1598" y2="500.5" stroke="#808080" stroke-width="1" stroke-dasharray="4 4"/><rect x="863" y="500" width="8" height="1" fill="#c0c0c0"/><rect x="1599" y="500" width="7" height="1" fill="#c0c0c0"/><line x1="932.5" y1="533" x2="932.5" y2="149" stroke="#808080" stroke-width="1" stroke-dasharray="4 4"/><line x1="992.5" y1="533" x2="992.5" y2="149" stroke="#808080" stroke-width="1" stroke-dasharray="4 4"/><line x1="1053.5" y1="533" x2="1053.5" y2="149" stroke="#808080" stroke-width="1" stroke-dasharray="4 4"/><line x1="1113.5" y1="533" x2="1113.5" y2="149" stroke="#808080" stroke-width="1" stroke-dasharray="4 4"/><line x1="1174.5" y1="533" x2="1174.5" y2="149" stroke="#808080" stroke-width="1" stroke-dasharray="4 4"/><line x1="1235.5" y1="533" x2="1235.5" y2="149" stroke="#808080" stroke-width="1" stroke-dasharray="4 4"/><line x1="1295.5" y1="533" x2="1295.5" y2="149" stroke="#808080" stroke-width="1" stroke-dasharray="4 4"/><line x1="1356.5" y1="533" x2="1356.5" y2="149" stroke="#808080" stroke-width="1" stroke-dasharray="4 4"/><line x1="1416.5" y1="533" x2="1416.5" y2="149" stroke="#808080" stroke-width="1" stroke-dasharray="4 4"/><line x1="1477.5" y1="533" x2="1477.5" y2="149" stroke="#808080" stroke-width="1" stroke-dasharray="4 4"/><line x1="1537.5" y1="533" x2="1537.5" y2="149" stroke="#808080" stroke-width="1" stroke-dasharray="4 4"/><rect x="871" y="149" width="728" height="1" fill="#c0c0c0"/><rect x="871" y="532" width="728" height="1" fill="#c0c0c0"/><rect x="871" y="149" width="1" height="384" fill="#c0c0c0"/><rect x="1598" y="149" width="1" height="384" fill="#c0c0c0"/><rect x="863" y="149" width="8" height="1" fill="#c0c0c0"/><rect x="863" y="532" width="8" height="1" fill="#c0c0c0"/><line x1="871" y1="581.5" x2="1598" y2="581.5" stroke="#808080" stroke-width="1" stroke-dasharray="4 4"/><rect x="863" y="581" width="8" height="1" fill="#c0c0c0"/><line x1="871" y1="608.5" x2="1598" y2="608.5" stroke="#808080" stroke-width="1" stroke-dasharray="4 4"/><rect x="863" y="608" width="8" height="1" fill="#c0c0c0"/><line x1="871" y1="636.5" x2="1598" y2="636.5" stroke="#808080" stroke-width="1" stroke-dasharray="4 4"/><rect x="863" y="636" width="8" height="1" fill="#c0c0c0"/><line x1="871" y1="664.5" x2="1598" y2="664.5" stroke="#808080" stroke-width="1" stroke-dasharray="4 4"/><rect x="863" y="664" width="8" height="1" fill="#c0c0c0"/><line x1="871" y1="691.5" x2="1598" y2="691.5" stroke="#808080" stroke-width="1" stroke-dasharray="4 4"/><rect x="863" y="691" width="8" height="1" fill="#c0c0c0"/><line x1="871" y1="719.5" x2="1598" y2="719.5" stroke="#808080" stroke-width="1" stroke-dasharray="4 4"/><rect x="863" y="719" width="8" height="1" fill="#c0c0c0"/><line x1="871" y1="747.5" x2="1598" y2="747.5" stroke="#808080" stroke-width="1" stroke-dasharray="4 4"/><rect x="863" y="747" width="8" height="1" fill="#c0c0c0"/><line x1="871" y1="774.5" x2="1598" y2="774.5" stroke="#808080" stroke-width="1" stroke-dasharray="4 4"/><rect x="863" y="774" width="8" height="1" fill="#c0c0c0"/><line x1="871" y1="802.5" x2="1598" y2="802.5" stroke="#808080" stroke-width="1" stroke-dasharray="4 4"/><rect x="863" y="802" width="8" height="1" fill="#c0c0c0"/><line x1="871" y1="829.5" x2="1598" y2="829.5" stroke="#808080" stroke-width="1" stroke-dasharray="4 4"/><rect x="863" y="829" width="8" height="1" fill="#c0c0c0"/><line x1="871" y1="857.5" x2="1598" y2="857.5" stroke="#808080" stroke-width="1" stroke-dasharray="4 4"/><rect x="863" y="857" width="8" height="1" fill="#c0c0c0"/><line x1="871" y1="885.5" x2="1598" y2="885.5" stroke="#808080" stroke-width="1" stroke-dasharray="4 4"/><rect x="863" y="885" width="8" height="1" fill="#c0c0c0"/><line x1="871" y1="912.5" x2="1598" y2="912.5" stroke="#808080" stroke-width="1" stroke-dasharray="4 4"/><rect x="863" y="912" width="8" height="1" fill="#c0c0c0"/><line x1="932.5" y1="941" x2="932.5" y2="553" stroke="#808080" stroke-width="1" stroke-dasharray="4 4"/><line x1="992.5" y1="941" x2="992.5" y2="553" stroke="#808080" stroke-width="1" stroke-dasharray="4 4"/><line x1="1053.5" y1="941" x2="1053.5" y2="553" stroke="#808080" stroke-width="1" stroke-dasharray="4 4"/><line x1="1113.5" y1="941" x2="1113.5" y2="553" stroke="#808080" stroke-width="1" stroke-dasharray="4 4"/><line x1="1174.5" y1="941" x2="1174.5" y2="553" stroke="#808080" stroke-width="1" stroke-dasharray="4 4"/><line x1="1235.5" y1="941" x2="1235.5" y2="553" stroke="#808080" stroke-width="1" stroke-dasharray="4 4"/><line x1="1295.5" y1="941" x2="1295.5" y2="553" stroke="#808080" stroke-width="1" stroke-dasharray="4 4"/><line x1="1356.5" y1="941" x2="1356.5" y2="553" stroke="#808080" stroke-width="1" stroke-dasharray="4 4"/><line x1="1416.5" y1="941" x2="1416.5" y2="553" stroke="#808080" stroke-width="1" stroke-dasharray="4 4"/><line x1="1477.5" y1="941" x2="1477.5" y2="553" stroke="#808080" stroke-width="1" stroke-dasharray="4 4"/><line x1="1537.5" y1="941" x2="1537.5" y2="553" stroke="#808080" stroke-width="1" stroke-dasharray="4 4"/><rect x="871" y="553" width="728" height="1" fill="#c0c0c0"/><rect x="871" y="940" width="728" height="1" fill="#c0c0c0"/><rect x="871" y="553" width="1" height="388" fill="#c0c0c0"/><rect x="1598" y="553" width="1" height="388" fill="#c0c0c0"/><rect x="863" y="553" width="8" height="1" fill="#c0c0c0"/><rect x="863" y="940" width="8" height="1" fill="#c0c0c0"/><rect x="1599" y="149" width="7" height="1" fill="#c0c0c0"/><rect x="1599" y="532" width="7" height="1" fill="#c0c0c0"/><rect x="871" y="940" width="1" height="8" fill="#c0c0c0"/><rect x="932" y="940" width="1" height="8" fill="#c0c0c0"/><rect x="992" y="940" width="1" height="8" fill="#c0c0c0"/><rect x="1053" y="940" width="1" height="8" fill="#c0c0c0"/><rect x="1113" y="940" width="1" height="8" fill="#c0c0c0"/><rect x="1174" y="940" width="1" height="8" fill="#c0c0c0"/><rect x="1235" y="940" width="1" height="8" fill="#c0c0c0"/><rect x="1295" y="940" width="1" height="8" fill="#c0c0c0"/><rect x="1356" y="940" width="1" height="8" fill="#c0c0c0"/><rect x="1416" y="940" width="1" height="8" fill="#c0c0c0"/><rect x="1477" y="940" width="1" height="8" fill="#c0c0c0"/><rect x="1537" y="940" width="1" height="8" fill="#c0c0c0"/><rect x="1598" y="940" width="1" height="8" fill="#c0c0c0"/><polyline points="871.5,341.1 1053.25,341.1 1113.8333333333333,503.875 1174.4166666666667,503.875 1295.5833333333333,178.325 1356.1666666666667,178.325 1477.3333333333335,503.875 1537.9166666666665,503.875 1598.5,341.1" fill="none" stroke="#ff0000" stroke-width="1"/><polyline points="871.5,341.1 1053.25,341.1 1113.8333333333333,503.875 1174.4166666666667,503.875 1295.5833333333333,178.325 1356.1666666666667,178.325 1477.3333333333335,503.875 1537.9166666666665,503.875 1598.5,341.1" fill="none" stroke="#00b4b4" stroke-width="1"/><polyline points="871.5,747.1 1053.25,747.1 1113.8333333333333,581.2428571428571 1174.4166666666667,581.2428571428571 1235.0,747.1 1416.75,747.1 1477.3333333333335,581.2428571428571 1537.9166666666665,581.2428571428571 1598.5,747.1" fill="none" stroke="#0000ff" stroke-width="1"/><polyline points="871.5,747.1 1235.0,747.1 1295.5833333333333,912.9571428571429 1356.1666666666667,912.9571428571429 1416.75,747.1 1598.5,747.1" fill="none" stroke="#00ff00" stroke-width="1"/></g><g font-family="Liberation Sans"><text x="863" y="154.0" text-anchor="end" fill="#c8c8c8" font-size="13.6" stroke="#c8c8c8" stroke-width="0.35">60V</text><text x="1641" y="154.0" text-anchor="end" fill="#c8c8c8" font-size="13.6" stroke="#c8c8c8" stroke-width="0.35">3.0A</text><text x="863" y="185.91666666666666" text-anchor="end" fill="#c8c8c8" font-size="13.6" stroke="#c8c8c8" stroke-width="0.35">50V</text><text x="1641" y="185.91666666666666" text-anchor="end" fill="#c8c8c8" font-size="13.6" stroke="#c8c8c8" stroke-width="0.35">2.5A</text><text x="863" y="217.83333333333334" text-anchor="end" fill="#c8c8c8" font-size="13.6" stroke="#c8c8c8" stroke-width="0.35">40V</text><text x="1641" y="217.83333333333334" text-anchor="end" fill="#c8c8c8" font-size="13.6" stroke="#c8c8c8" stroke-width="0.35">2.0A</text><text x="863" y="249.75" text-anchor="end" fill="#c8c8c8" font-size="13.6" stroke="#c8c8c8" stroke-width="0.35">30V</text><text x="1641" y="249.75" text-anchor="end" fill="#c8c8c8" font-size="13.6" stroke="#c8c8c8" stroke-width="0.35">1.5A</text><text x="863" y="281.6666666666667" text-anchor="end" fill="#c8c8c8" font-size="13.6" stroke="#c8c8c8" stroke-width="0.35">20V</text><text x="1641" y="281.6666666666667" text-anchor="end" fill="#c8c8c8" font-size="13.6" stroke="#c8c8c8" stroke-width="0.35">1.0A</text><text x="863" y="313.58333333333337" text-anchor="end" fill="#c8c8c8" font-size="13.6" stroke="#c8c8c8" stroke-width="0.35">10V</text><text x="1641" y="313.58333333333337" text-anchor="end" fill="#c8c8c8" font-size="13.6" stroke="#c8c8c8" stroke-width="0.35">0.5A</text><text x="863" y="345.5" text-anchor="end" fill="#c8c8c8" font-size="13.6" stroke="#c8c8c8" stroke-width="0.35">0V</text><text x="1641" y="345.5" text-anchor="end" fill="#c8c8c8" font-size="13.6" stroke="#c8c8c8" stroke-width="0.35">0.0A</text><text x="863" y="377.41666666666663" text-anchor="end" fill="#c8c8c8" font-size="13.6" stroke="#c8c8c8" stroke-width="0.35">-10V</text><text x="1641" y="377.41666666666663" text-anchor="end" fill="#c8c8c8" font-size="13.6" stroke="#c8c8c8" stroke-width="0.35">-0.5A</text><text x="863" y="409.33333333333337" text-anchor="end" fill="#c8c8c8" font-size="13.6" stroke="#c8c8c8" stroke-width="0.35">-20V</text><text x="1641" y="409.33333333333337" text-anchor="end" fill="#c8c8c8" font-size="13.6" stroke="#c8c8c8" stroke-width="0.35">-1.0A</text><text x="863" y="441.25" text-anchor="end" fill="#c8c8c8" font-size="13.6" stroke="#c8c8c8" stroke-width="0.35">-30V</text><text x="1641" y="441.25" text-anchor="end" fill="#c8c8c8" font-size="13.6" stroke="#c8c8c8" stroke-width="0.35">-1.5A</text><text x="863" y="473.1666666666667" text-anchor="end" fill="#c8c8c8" font-size="13.6" stroke="#c8c8c8" stroke-width="0.35">-40V</text><text x="1641" y="473.1666666666667" text-anchor="end" fill="#c8c8c8" font-size="13.6" stroke="#c8c8c8" stroke-width="0.35">-2.0A</text><text x="863" y="505.0833333333333" text-anchor="end" fill="#c8c8c8" font-size="13.6" stroke="#c8c8c8" stroke-width="0.35">-50V</text><text x="1641" y="505.0833333333333" text-anchor="end" fill="#c8c8c8" font-size="13.6" stroke="#c8c8c8" stroke-width="0.35">-2.5A</text><text x="863" y="537.0" text-anchor="end" fill="#c8c8c8" font-size="13.6" stroke="#c8c8c8" stroke-width="0.35">-60V</text><text x="1641" y="537.0" text-anchor="end" fill="#c8c8c8" font-size="13.6" stroke="#c8c8c8" stroke-width="0.35">-3.0A</text><text x="863" y="558.0" text-anchor="end" fill="#c8c8c8" font-size="13.6" stroke="#c8c8c8" stroke-width="0.35">1.4V</text><text x="863" y="585.6428571428571" text-anchor="end" fill="#c8c8c8" font-size="13.6" stroke="#c8c8c8" stroke-width="0.35">1.2V</text><text x="863" y="613.2857142857143" text-anchor="end" fill="#c8c8c8" font-size="13.6" stroke="#c8c8c8" stroke-width="0.35">1.0V</text><text x="863" y="640.9285714285714" text-anchor="end" fill="#c8c8c8" font-size="13.6" stroke="#c8c8c8" stroke-width="0.35">0.8V</text><text x="863" y="668.5714285714286" text-anchor="end" fill="#c8c8c8" font-size="13.6" stroke="#c8c8c8" stroke-width="0.35">0.6V</text><text x="863" y="696.2142857142858" text-anchor="end" fill="#c8c8c8" font-size="13.6" stroke="#c8c8c8" stroke-width="0.35">0.4V</text><text x="863" y="723.8571428571429" text-anchor="end" fill="#c8c8c8" font-size="13.6" stroke="#c8c8c8" stroke-width="0.35">0.2V</text><text x="863" y="751.5" text-anchor="end" fill="#c8c8c8" font-size="13.6" stroke="#c8c8c8" stroke-width="0.35">0.0V</text><text x="863" y="779.1428571428571" text-anchor="end" fill="#c8c8c8" font-size="13.6" stroke="#c8c8c8" stroke-width="0.35">-0.2V</text><text x="863" y="806.7857142857142" text-anchor="end" fill="#c8c8c8" font-size="13.6" stroke="#c8c8c8" stroke-width="0.35">-0.4V</text><text x="863" y="834.4285714285714" text-anchor="end" fill="#c8c8c8" font-size="13.6" stroke="#c8c8c8" stroke-width="0.35">-0.6V</text><text x="863" y="862.0714285714286" text-anchor="end" fill="#c8c8c8" font-size="13.6" stroke="#c8c8c8" stroke-width="0.35">-0.8V</text><text x="863" y="889.7142857142858" text-anchor="end" fill="#c8c8c8" font-size="13.6" stroke="#c8c8c8" stroke-width="0.35">-1.0V</text><text x="863" y="917.3571428571429" text-anchor="end" fill="#c8c8c8" font-size="13.6" stroke="#c8c8c8" stroke-width="0.35">-1.2V</text><text x="863" y="945.0" text-anchor="end" fill="#c8c8c8" font-size="13.6" stroke="#c8c8c8" stroke-width="0.35">-1.4V</text><text x="871.0" y="961" text-anchor="middle" fill="#c8c8c8" font-size="13.6" stroke="#c8c8c8" stroke-width="0.35">0s</text><text x="931.5833333333334" y="961" text-anchor="middle" fill="#c8c8c8" font-size="13.6" stroke="#c8c8c8" stroke-width="0.35">1s</text><text x="992.1666666666666" y="961" text-anchor="middle" fill="#c8c8c8" font-size="13.6" stroke="#c8c8c8" stroke-width="0.35">2s</text><text x="1052.75" y="961" text-anchor="middle" fill="#c8c8c8" font-size="13.6" stroke="#c8c8c8" stroke-width="0.35">3s</text><text x="1113.3333333333333" y="961" text-anchor="middle" fill="#c8c8c8" font-size="13.6" stroke="#c8c8c8" stroke-width="0.35">4s</text><text x="1173.9166666666667" y="961" text-anchor="middle" fill="#c8c8c8" font-size="13.6" stroke="#c8c8c8" stroke-width="0.35">5s</text><text x="1234.5" y="961" text-anchor="middle" fill="#c8c8c8" font-size="13.6" stroke="#c8c8c8" stroke-width="0.35">6s</text><text x="1295.0833333333333" y="961" text-anchor="middle" fill="#c8c8c8" font-size="13.6" stroke="#c8c8c8" stroke-width="0.35">7s</text><text x="1355.6666666666667" y="961" text-anchor="middle" fill="#c8c8c8" font-size="13.6" stroke="#c8c8c8" stroke-width="0.35">8s</text><text x="1416.25" y="961" text-anchor="middle" fill="#c8c8c8" font-size="13.6" stroke="#c8c8c8" stroke-width="0.35">9s</text><text x="1476.8333333333335" y="961" text-anchor="middle" fill="#c8c8c8" font-size="13.6" stroke="#c8c8c8" stroke-width="0.35">10s</text><text x="1537.4166666666665" y="961" text-anchor="middle" fill="#c8c8c8" font-size="13.6" stroke="#c8c8c8" stroke-width="0.35">11s</text><text x="1598.0" y="961" text-anchor="middle" fill="#c8c8c8" font-size="13.6" stroke="#c8c8c8" stroke-width="0.35">12s</text><text x="1051.5" y="144" text-anchor="middle" fill="#ff0000" font-size="12.5" font-weight="bold">V(out)</text><text x="1414" y="144" text-anchor="middle" fill="#00b4b4" font-size="12.5" font-weight="bold">I(R17)</text><text x="1051.5" y="548" text-anchor="middle" fill="#0000ff" font-size="12.5" font-weight="bold">V(in-n,-Ub)</text><text x="1414" y="548" text-anchor="middle" fill="#00ff00" font-size="12.5" font-weight="bold">V(in-p,+Ub)</text></g></svg>
</body></html>
